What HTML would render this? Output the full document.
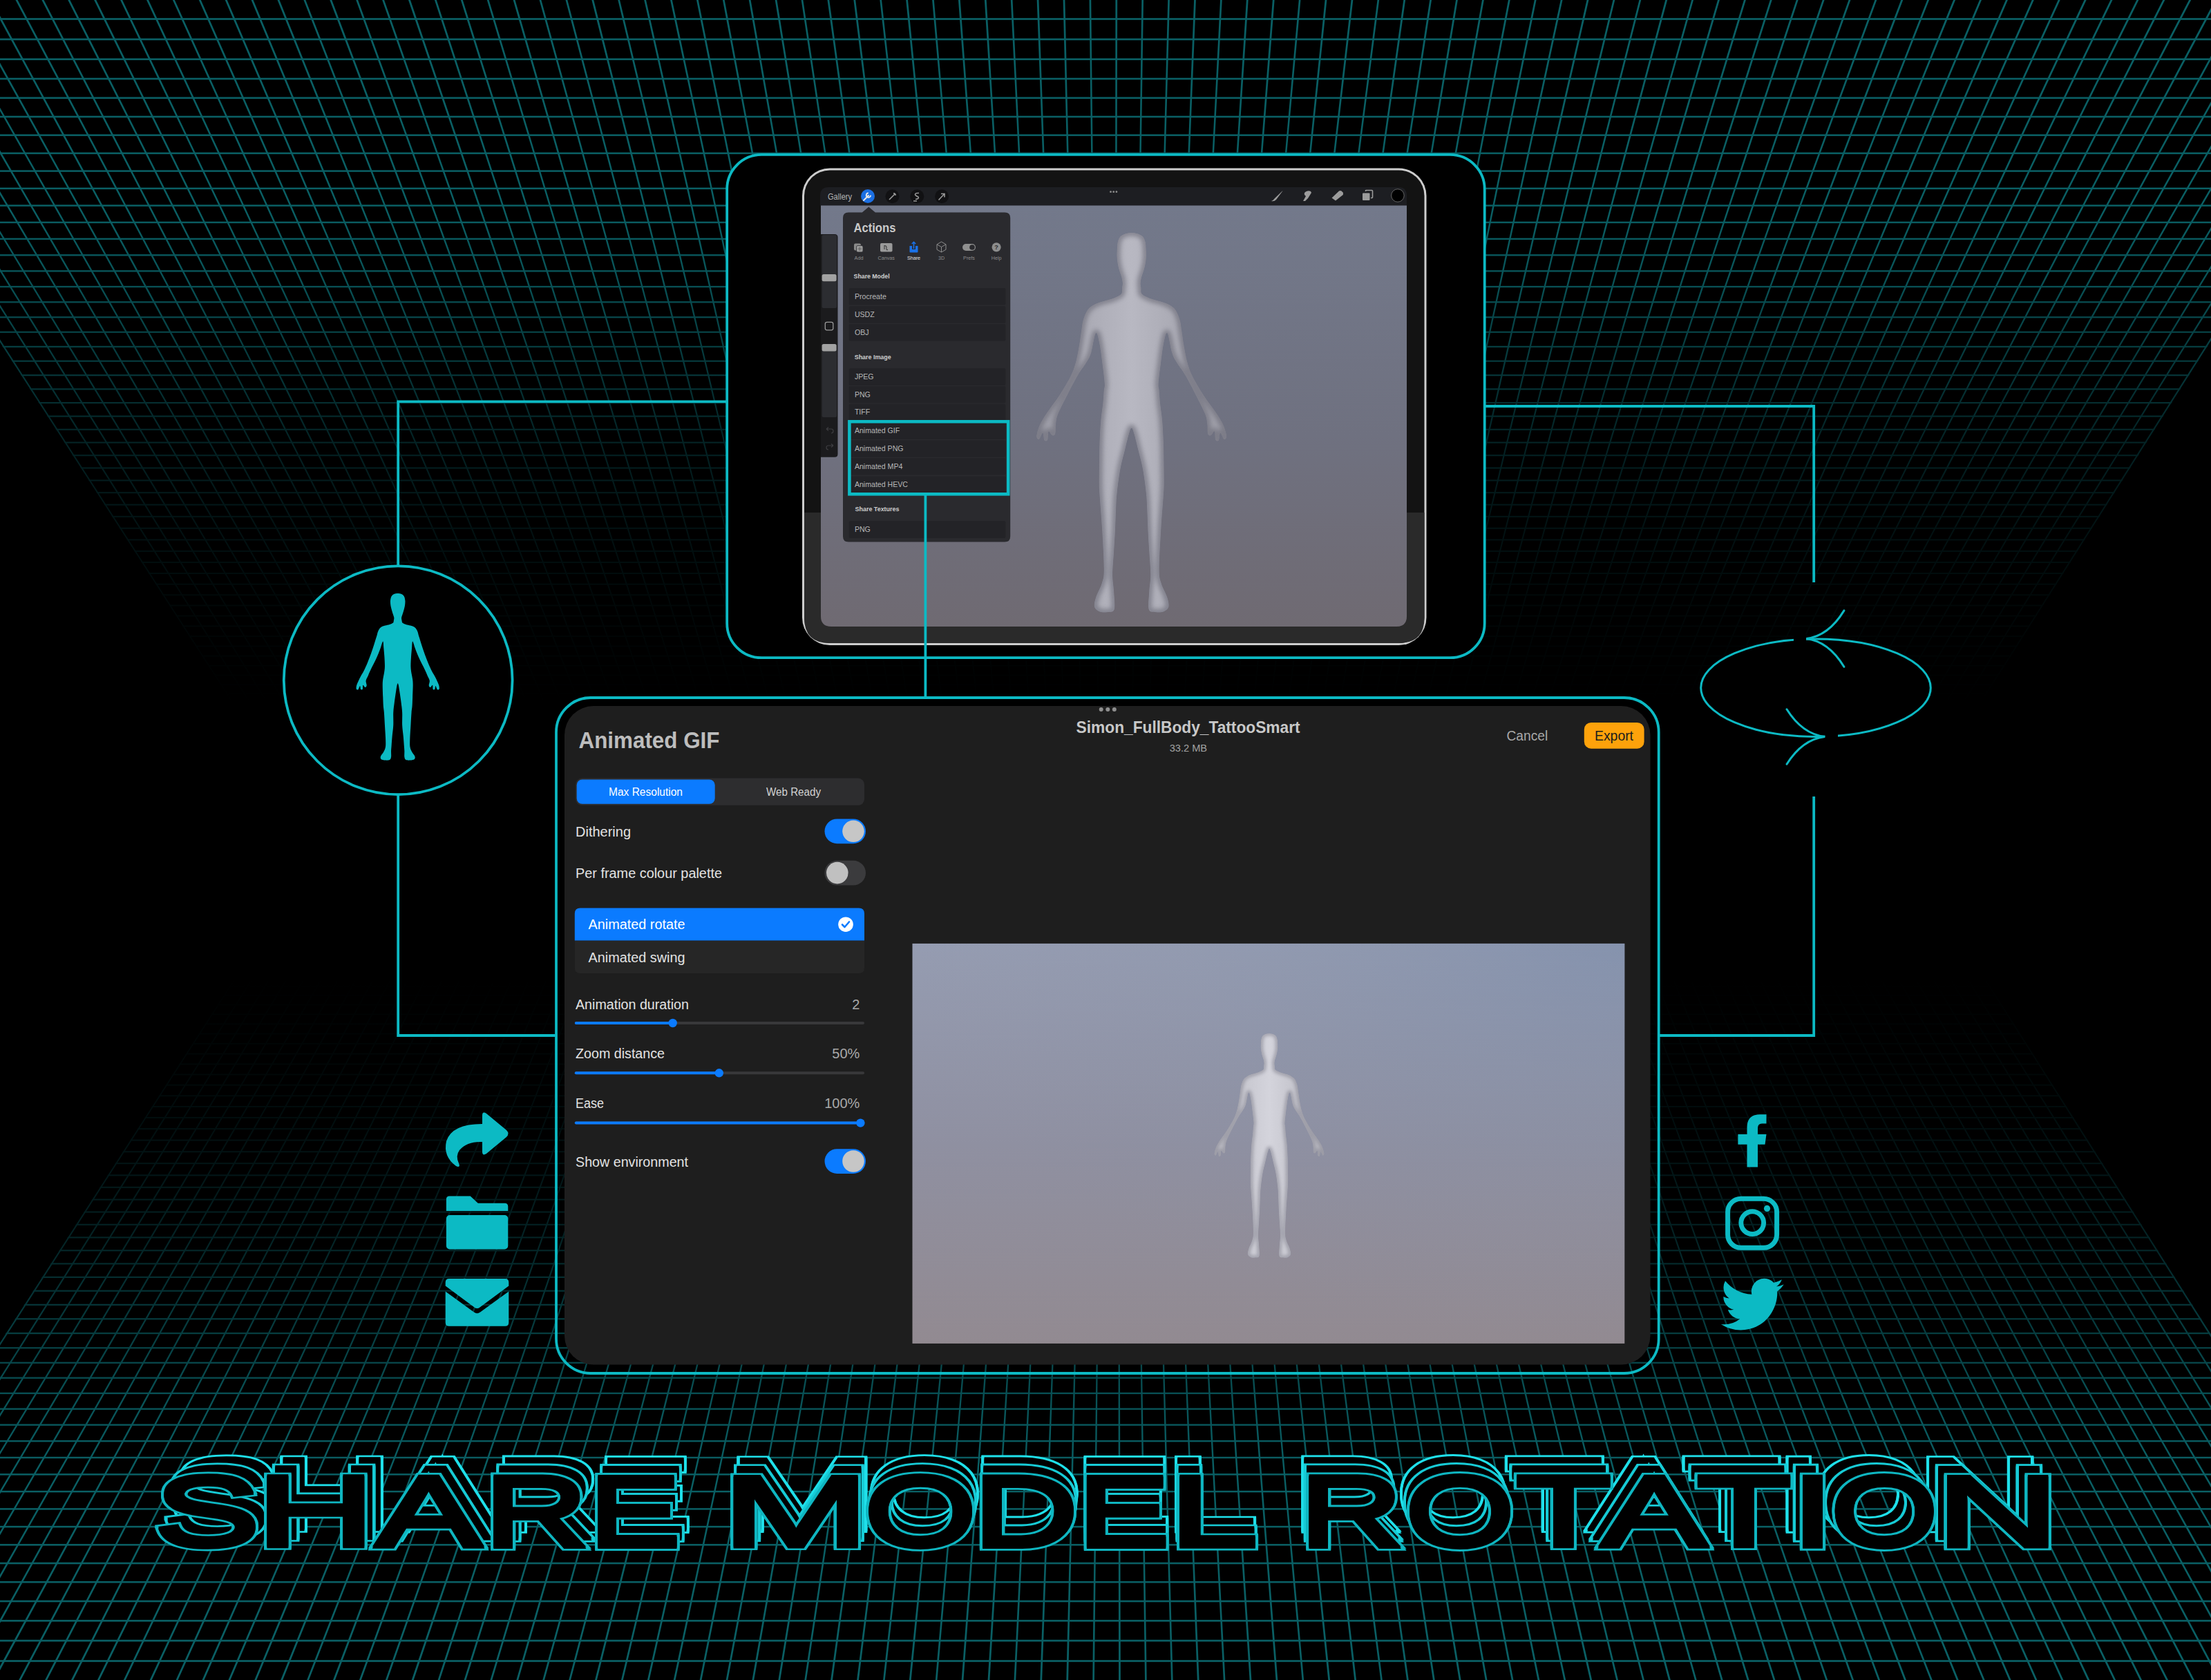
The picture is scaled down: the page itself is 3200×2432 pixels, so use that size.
<!DOCTYPE html>
<html><head><meta charset="utf-8"><title>Share Model Rotation</title>
<style>html,body{margin:0;padding:0;background:#000;}body{width:3200px;height:2432px;overflow:hidden;}
svg{display:block;font-family:"Liberation Sans",sans-serif;}</style></head>
<body><svg width="3200" height="2432" viewBox="0 0 3200 2432">
<rect width="3200" height="2432" fill="#000"/>
<defs>
<linearGradient id="fadeG" gradientUnits="userSpaceOnUse" x1="0" y1="0" x2="0" y2="1216"><stop offset="0.000" stop-color="#ffffff"/><stop offset="0.247" stop-color="#ffffff"/><stop offset="0.330" stop-color="#e0e0e0"/><stop offset="0.420" stop-color="#9e9e9e"/><stop offset="0.520" stop-color="#616161"/><stop offset="0.620" stop-color="#333333"/><stop offset="0.710" stop-color="#171717"/><stop offset="0.790" stop-color="#080808"/><stop offset="0.840" stop-color="#000000"/></linearGradient>
<mask id="fadeM" maskUnits="userSpaceOnUse" x="-400" y="-10" width="4000" height="1300"><rect x="-400" y="-10" width="4000" height="1300" fill="url(#fadeG)"/></mask>
<clipPath id="ceilC"><path d="M-325.5 -10L3519.1 -10L2802.8 1120.0L401.5 1120.0Z"/></clipPath>
<path id="human" d="M57.00 0.00C55.33 0.00 53.42 0.33 52.00 1.00C50.58 1.67 49.33 2.50 48.50 4.00C47.67 5.50 47.17 7.83 47.00 10.00C46.83 12.17 47.17 14.83 47.50 17.00C47.83 19.17 48.50 21.17 49.00 23.00C49.50 24.83 50.00 26.33 50.50 28.00C51.00 29.67 51.83 31.50 52.00 33.00C52.17 34.50 51.75 35.83 51.50 37.00C51.25 38.17 51.42 39.17 50.50 40.00C49.58 40.83 47.75 41.42 46.00 42.00C44.25 42.58 42.00 42.83 40.00 43.50C38.00 44.17 35.58 44.75 34.00 46.00C32.42 47.25 31.42 49.00 30.50 51.00C29.58 53.00 29.42 55.00 28.50 58.00C27.58 61.00 26.25 65.17 25.00 69.00C23.75 72.83 22.50 76.83 21.00 81.00C19.50 85.17 17.67 90.00 16.00 94.00C14.33 98.00 12.50 102.00 11.00 105.00C9.50 108.00 8.17 109.83 7.00 112.00C5.83 114.17 4.92 116.00 4.00 118.00C3.08 120.00 2.00 122.17 1.50 124.00C1.00 125.83 0.67 128.00 1.00 129.00C1.33 130.00 2.67 130.67 3.50 130.00C4.33 129.33 5.42 125.08 6.00 125.00C6.58 124.92 6.42 128.75 7.00 129.50C7.58 130.25 9.00 130.42 9.50 129.50C10.00 128.58 9.42 124.42 10.00 124.00C10.58 123.58 12.17 126.92 13.00 127.00C13.83 127.08 14.83 126.00 15.00 124.50C15.17 123.00 13.67 120.25 14.00 118.00C14.33 115.75 15.67 114.00 17.00 111.00C18.33 108.00 20.33 103.50 22.00 100.00C23.67 96.50 25.50 93.17 27.00 90.00C28.50 86.83 29.83 83.83 31.00 81.00C32.17 78.17 33.00 75.67 34.00 73.00C35.00 70.33 36.33 64.83 37.00 65.00C37.67 65.17 37.67 70.50 38.00 74.00C38.33 77.50 38.75 81.83 39.00 86.00C39.25 90.17 39.58 95.33 39.50 99.00C39.42 102.67 38.92 105.17 38.50 108.00C38.08 110.83 37.33 113.33 37.00 116.00C36.67 118.67 36.50 120.00 36.50 124.00C36.50 128.00 36.83 135.33 37.00 140.00C37.17 144.67 37.25 148.50 37.50 152.00C37.75 155.50 38.17 156.67 38.50 161.00C38.83 165.33 39.17 172.33 39.50 178.00C39.83 183.67 40.33 190.17 40.50 195.00C40.67 199.83 40.92 203.83 40.50 207.00C40.08 210.17 39.08 211.83 38.00 214.00C36.92 216.17 34.58 218.33 34.00 220.00C33.42 221.67 33.50 223.08 34.50 224.00C35.50 224.92 38.08 225.33 40.00 225.50C41.92 225.67 44.67 225.75 46.00 225.00C47.33 224.25 47.67 223.00 48.00 221.00C48.33 219.00 47.92 215.50 48.00 213.00C48.08 210.50 48.25 209.33 48.50 206.00C48.75 202.67 49.08 197.67 49.50 193.00C49.92 188.33 50.75 183.33 51.00 178.00C51.25 172.67 50.75 166.17 51.00 161.00C51.25 155.83 51.92 151.67 52.50 147.00C53.08 142.33 53.92 136.83 54.50 133.00C55.08 129.17 55.58 125.92 56.00 124.00C56.42 122.08 56.67 121.50 57.00 121.50C57.33 121.50 57.58 122.08 58.00 124.00C58.42 125.92 58.92 129.17 59.50 133.00C60.08 136.83 60.92 142.33 61.50 147.00C62.08 151.67 62.75 155.83 63.00 161.00C63.25 166.17 62.75 172.67 63.00 178.00C63.25 183.33 64.08 188.33 64.50 193.00C64.92 197.67 65.25 202.67 65.50 206.00C65.75 209.33 65.92 210.50 66.00 213.00C66.08 215.50 65.67 219.00 66.00 221.00C66.33 223.00 66.67 224.25 68.00 225.00C69.33 225.75 72.08 225.67 74.00 225.50C75.92 225.33 78.50 224.92 79.50 224.00C80.50 223.08 80.58 221.67 80.00 220.00C79.42 218.33 77.08 216.17 76.00 214.00C74.92 211.83 73.92 210.17 73.50 207.00C73.08 203.83 73.33 199.83 73.50 195.00C73.67 190.17 74.17 183.67 74.50 178.00C74.83 172.33 75.17 165.33 75.50 161.00C75.83 156.67 76.25 155.50 76.50 152.00C76.75 148.50 76.83 144.67 77.00 140.00C77.17 135.33 77.50 128.00 77.50 124.00C77.50 120.00 77.33 118.67 77.00 116.00C76.67 113.33 75.92 110.83 75.50 108.00C75.08 105.17 74.58 102.67 74.50 99.00C74.42 95.33 74.75 90.17 75.00 86.00C75.25 81.83 75.67 77.50 76.00 74.00C76.33 70.50 76.33 65.17 77.00 65.00C77.67 64.83 79.00 70.33 80.00 73.00C81.00 75.67 81.83 78.17 83.00 81.00C84.17 83.83 85.50 86.83 87.00 90.00C88.50 93.17 90.33 96.50 92.00 100.00C93.67 103.50 95.67 108.00 97.00 111.00C98.33 114.00 99.67 115.75 100.00 118.00C100.33 120.25 98.83 123.00 99.00 124.50C99.17 126.00 100.17 127.08 101.00 127.00C101.83 126.92 103.42 123.58 104.00 124.00C104.58 124.42 104.00 128.58 104.50 129.50C105.00 130.42 106.42 130.25 107.00 129.50C107.58 128.75 107.42 124.92 108.00 125.00C108.58 125.08 109.67 129.33 110.50 130.00C111.33 130.67 112.67 130.00 113.00 129.00C113.33 128.00 113.00 125.83 112.50 124.00C112.00 122.17 110.92 120.00 110.00 118.00C109.08 116.00 108.17 114.17 107.00 112.00C105.83 109.83 104.50 108.00 103.00 105.00C101.50 102.00 99.67 98.00 98.00 94.00C96.33 90.00 94.50 85.17 93.00 81.00C91.50 76.83 90.25 72.83 89.00 69.00C87.75 65.17 86.42 61.00 85.50 58.00C84.58 55.00 84.42 53.00 83.50 51.00C82.58 49.00 81.58 47.25 80.00 46.00C78.42 44.75 76.00 44.17 74.00 43.50C72.00 42.83 69.75 42.58 68.00 42.00C66.25 41.42 64.42 40.83 63.50 40.00C62.58 39.17 62.75 38.17 62.50 37.00C62.25 35.83 61.83 34.50 62.00 33.00C62.17 31.50 63.00 29.67 63.50 28.00C64.00 26.33 64.50 24.83 65.00 23.00C65.50 21.17 66.17 19.17 66.50 17.00C66.83 14.83 67.17 12.17 67.00 10.00C66.83 7.83 66.33 5.50 65.50 4.00C64.67 2.50 63.42 1.67 62.00 1.00C60.58 0.33 58.67 0.00 57.00 0.00Z"/>
<path id="human3d" d="M57.00 0.00C55.83 0.00 54.58 0.13 53.50 0.50C52.42 0.87 51.25 1.37 50.50 2.20C49.75 3.03 49.32 4.20 49.00 5.50C48.68 6.80 48.68 8.58 48.60 10.00C48.52 11.42 48.45 12.67 48.50 14.00C48.55 15.33 48.67 16.58 48.90 18.00C49.13 19.42 49.52 21.08 49.90 22.50C50.28 23.92 50.88 25.25 51.20 26.50C51.52 27.75 51.75 28.92 51.80 30.00C51.85 31.08 51.63 31.92 51.50 33.00C51.37 34.08 51.83 35.50 51.00 36.50C50.17 37.50 48.33 38.25 46.50 39.00C44.67 39.75 41.83 40.37 40.00 41.00C38.17 41.63 36.92 41.97 35.50 42.80C34.08 43.63 32.58 44.47 31.50 46.00C30.42 47.53 29.58 50.00 29.00 52.00C28.42 54.00 28.40 55.40 28.00 58.00C27.60 60.60 27.18 64.27 26.60 67.60C26.02 70.93 25.35 74.93 24.50 78.00C23.65 81.07 23.00 82.92 21.50 86.00C20.00 89.08 17.42 93.42 15.50 96.50C13.58 99.58 11.58 102.17 10.00 104.50C8.42 106.83 7.08 108.67 6.00 110.50C4.92 112.33 4.17 113.67 3.50 115.50C2.83 117.33 2.00 120.22 2.00 121.50C2.00 122.78 2.90 123.53 3.50 123.20C4.10 122.87 5.10 119.40 5.60 119.50C6.10 119.60 6.03 123.13 6.50 123.80C6.97 124.47 7.98 124.38 8.40 123.50C8.82 122.62 8.57 118.95 9.00 118.50C9.43 118.05 10.37 120.55 11.00 120.80C11.63 121.05 12.43 121.13 12.80 120.00C13.17 118.87 12.92 116.00 13.20 114.00C13.48 112.00 13.42 110.83 14.50 108.00C15.58 105.17 17.80 100.83 19.70 97.00C21.60 93.17 24.10 88.17 25.90 85.00C27.70 81.83 29.23 80.17 30.50 78.00C31.77 75.83 32.53 75.00 33.50 72.00C34.47 69.00 35.48 61.00 36.30 60.00C37.12 59.00 37.75 62.83 38.40 66.00C39.05 69.17 39.70 75.00 40.20 79.00C40.70 83.00 41.27 87.50 41.40 90.00C41.53 92.50 41.17 92.00 41.00 94.00C40.83 96.00 40.70 99.00 40.40 102.00C40.10 105.00 39.52 108.17 39.20 112.00C38.88 115.83 38.65 121.00 38.50 125.00C38.35 129.00 38.35 131.83 38.30 136.00C38.25 140.17 38.15 146.33 38.20 150.00C38.25 153.67 38.30 153.33 38.60 158.00C38.90 162.67 39.60 170.83 40.00 178.00C40.40 185.17 41.03 195.83 41.00 201.00C40.97 206.17 40.55 206.33 39.80 209.00C39.05 211.67 37.22 214.67 36.50 217.00C35.78 219.33 35.17 221.50 35.50 223.00C35.83 224.50 37.25 225.45 38.50 226.00C39.75 226.55 41.58 226.52 43.00 226.30C44.42 226.08 46.37 226.75 47.00 224.70C47.63 222.65 46.97 217.45 46.80 214.00C46.63 210.55 46.00 208.00 46.00 204.00C46.00 200.00 46.55 194.33 46.80 190.00C47.05 185.67 47.30 182.17 47.50 178.00C47.70 173.83 47.82 168.83 48.00 165.00C48.18 161.17 48.18 159.00 48.60 155.00C49.02 151.00 49.72 145.33 50.50 141.00C51.28 136.67 52.47 132.50 53.30 129.00C54.13 125.50 54.88 122.08 55.50 120.00C56.12 117.92 56.50 116.50 57.00 116.50C57.50 116.50 57.88 117.92 58.50 120.00C59.12 122.08 59.87 125.50 60.70 129.00C61.53 132.50 62.72 136.67 63.50 141.00C64.28 145.33 64.98 151.00 65.40 155.00C65.82 159.00 65.82 161.17 66.00 165.00C66.18 168.83 66.30 173.83 66.50 178.00C66.70 182.17 66.95 185.67 67.20 190.00C67.45 194.33 68.00 200.00 68.00 204.00C68.00 208.00 67.37 210.55 67.20 214.00C67.03 217.45 66.37 222.65 67.00 224.70C67.63 226.75 69.58 226.08 71.00 226.30C72.42 226.52 74.25 226.55 75.50 226.00C76.75 225.45 78.17 224.50 78.50 223.00C78.83 221.50 78.22 219.33 77.50 217.00C76.78 214.67 74.95 211.67 74.20 209.00C73.45 206.33 73.03 206.17 73.00 201.00C72.97 195.83 73.60 185.17 74.00 178.00C74.40 170.83 75.10 162.67 75.40 158.00C75.70 153.33 75.75 153.67 75.80 150.00C75.85 146.33 75.75 140.17 75.70 136.00C75.65 131.83 75.65 129.00 75.50 125.00C75.35 121.00 75.12 115.83 74.80 112.00C74.48 108.17 73.90 105.00 73.60 102.00C73.30 99.00 73.17 96.00 73.00 94.00C72.83 92.00 72.47 92.50 72.60 90.00C72.73 87.50 73.30 83.00 73.80 79.00C74.30 75.00 74.95 69.17 75.60 66.00C76.25 62.83 76.88 59.00 77.70 60.00C78.52 61.00 79.53 69.00 80.50 72.00C81.47 75.00 82.23 75.83 83.50 78.00C84.77 80.17 86.30 81.83 88.10 85.00C89.90 88.17 92.40 93.17 94.30 97.00C96.20 100.83 98.42 105.17 99.50 108.00C100.58 110.83 100.52 112.00 100.80 114.00C101.08 116.00 100.83 118.87 101.20 120.00C101.57 121.13 102.37 121.05 103.00 120.80C103.63 120.55 104.57 118.05 105.00 118.50C105.43 118.95 105.18 122.62 105.60 123.50C106.02 124.38 107.03 124.47 107.50 123.80C107.97 123.13 107.90 119.60 108.40 119.50C108.90 119.40 109.90 122.87 110.50 123.20C111.10 123.53 112.00 122.78 112.00 121.50C112.00 120.22 111.17 117.33 110.50 115.50C109.83 113.67 109.08 112.33 108.00 110.50C106.92 108.67 105.58 106.83 104.00 104.50C102.42 102.17 100.42 99.58 98.50 96.50C96.58 93.42 94.00 89.08 92.50 86.00C91.00 82.92 90.35 81.07 89.50 78.00C88.65 74.93 87.98 70.93 87.40 67.60C86.82 64.27 86.40 60.60 86.00 58.00C85.60 55.40 85.58 54.00 85.00 52.00C84.42 50.00 83.58 47.53 82.50 46.00C81.42 44.47 79.92 43.63 78.50 42.80C77.08 41.97 75.83 41.63 74.00 41.00C72.17 40.37 69.33 39.75 67.50 39.00C65.67 38.25 63.83 37.50 63.00 36.50C62.17 35.50 62.63 34.08 62.50 33.00C62.37 31.92 62.15 31.08 62.20 30.00C62.25 28.92 62.48 27.75 62.80 26.50C63.12 25.25 63.72 23.92 64.10 22.50C64.48 21.08 64.87 19.42 65.10 18.00C65.33 16.58 65.45 15.33 65.50 14.00C65.55 12.67 65.48 11.42 65.40 10.00C65.32 8.58 65.32 6.80 65.00 5.50C64.68 4.20 64.25 3.03 63.50 2.20C62.75 1.37 61.58 0.87 60.50 0.50C59.42 0.13 58.17 0.00 57.00 0.00Z"/>
<clipPath id="hclip"><use href="#human3d"/></clipPath><filter id="fblur" x="-20%" y="-20%" width="140%" height="140%"><feGaussianBlur stdDeviation="1.3"/></filter>
<linearGradient id="canvasG" x1="0" y1="0" x2="0" y2="1"><stop offset="0" stop-color="#73798b"/><stop offset="0.55" stop-color="#6f7180"/><stop offset="1" stop-color="#6f6a72"/></linearGradient>
<linearGradient id="prevG" x1="0" y1="0" x2="0" y2="1"><stop offset="0" stop-color="#959cb1"/><stop offset="0.5" stop-color="#8f90a1"/><stop offset="1" stop-color="#928a91"/></linearGradient>
<radialGradient id="prevH" cx="1" cy="0" r="1"><stop offset="0" stop-color="#7388aa" stop-opacity="0.45"/><stop offset="0.6" stop-color="#8090aa" stop-opacity="0.12"/><stop offset="1" stop-color="#8890a8" stop-opacity="0"/></radialGradient>
<linearGradient id="figG" x1="0" y1="0" x2="1" y2="0"><stop offset="0" stop-color="#b9b9c1"/><stop offset="0.5" stop-color="#d4d4dc"/><stop offset="1" stop-color="#b4b4bc"/></linearGradient>
<linearGradient id="figG2" x1="0" y1="0" x2="1" y2="0"><stop offset="0" stop-color="#9c9ca6"/><stop offset="0.5" stop-color="#b8b8c2"/><stop offset="1" stop-color="#9a9aa4"/></linearGradient>
</defs>
<g clip-path="url(#ceilC)"><g mask="url(#fadeM)"><path d="M-322.0 -5.0L-318.7 -5.0L403.7 1120.0L401.7 1120.0ZM-284.0 -5.0L-280.7 -5.0L427.5 1120.0L425.5 1120.0ZM-246.0 -5.0L-242.8 -5.0L451.2 1120.0L449.2 1120.0ZM-208.0 -5.0L-204.8 -5.0L475.0 1120.0L473.0 1120.0ZM-170.1 -5.0L-166.9 -5.0L498.7 1120.0L496.7 1120.0ZM-132.1 -5.0L-128.9 -5.0L522.5 1120.0L520.5 1120.0ZM-94.1 -5.0L-91.0 -5.0L546.2 1120.0L544.2 1120.0ZM-56.1 -5.0L-53.0 -5.0L570.0 1120.0L568.0 1120.0ZM-18.2 -5.0L-15.0 -5.0L593.7 1120.0L591.7 1120.0ZM19.8 -5.0L22.9 -5.0L617.5 1120.0L615.5 1120.0ZM57.8 -5.0L60.9 -5.0L641.2 1120.0L639.3 1120.0ZM95.7 -5.0L98.8 -5.0L664.9 1120.0L663.0 1120.0ZM133.7 -5.0L136.8 -5.0L688.7 1120.0L686.8 1120.0ZM171.7 -5.0L174.7 -5.0L712.4 1120.0L710.5 1120.0ZM209.7 -5.0L212.7 -5.0L736.2 1120.0L734.3 1120.0ZM247.6 -5.0L250.6 -5.0L759.9 1120.0L758.0 1120.0ZM285.6 -5.0L288.6 -5.0L783.7 1120.0L781.8 1120.0ZM323.6 -5.0L326.6 -5.0L807.4 1120.0L805.5 1120.0ZM361.5 -5.0L364.5 -5.0L831.2 1120.0L829.3 1120.0ZM399.5 -5.0L402.5 -5.0L854.9 1120.0L853.1 1120.0ZM437.5 -5.0L440.4 -5.0L878.7 1120.0L876.8 1120.0ZM475.4 -5.0L478.4 -5.0L902.4 1120.0L900.6 1120.0ZM513.4 -5.0L516.3 -5.0L926.2 1120.0L924.3 1120.0ZM551.4 -5.0L554.3 -5.0L949.9 1120.0L948.1 1120.0ZM589.3 -5.0L592.3 -5.0L973.6 1120.0L971.8 1120.0ZM627.3 -5.0L630.2 -5.0L997.4 1120.0L995.6 1120.0ZM665.3 -5.0L668.2 -5.0L1021.1 1120.0L1019.3 1120.0ZM703.3 -5.0L706.1 -5.0L1044.9 1120.0L1043.1 1120.0ZM741.2 -5.0L744.1 -5.0L1068.6 1120.0L1066.8 1120.0ZM779.2 -5.0L782.0 -5.0L1092.4 1120.0L1090.6 1120.0ZM817.2 -5.0L820.0 -5.0L1116.1 1120.0L1114.4 1120.0ZM855.1 -5.0L858.0 -5.0L1139.9 1120.0L1138.1 1120.0ZM893.1 -5.0L895.9 -5.0L1163.6 1120.0L1161.9 1120.0ZM931.1 -5.0L933.9 -5.0L1187.4 1120.0L1185.6 1120.0ZM969.0 -5.0L971.8 -5.0L1211.1 1120.0L1209.4 1120.0ZM1007.0 -5.0L1009.8 -5.0L1234.9 1120.0L1233.1 1120.0ZM1045.0 -5.0L1047.8 -5.0L1258.6 1120.0L1256.9 1120.0ZM1082.9 -5.0L1085.7 -5.0L1282.4 1120.0L1280.6 1120.0ZM1120.9 -5.0L1123.7 -5.0L1306.1 1120.0L1304.4 1120.0ZM1158.9 -5.0L1161.6 -5.0L1329.9 1120.0L1328.1 1120.0ZM1196.8 -5.0L1199.6 -5.0L1353.6 1120.0L1351.9 1120.0ZM1234.8 -5.0L1237.6 -5.0L1377.4 1120.0L1375.6 1120.0ZM1272.8 -5.0L1275.5 -5.0L1401.1 1120.0L1399.4 1120.0ZM1310.7 -5.0L1313.5 -5.0L1424.9 1120.0L1423.1 1120.0ZM1348.7 -5.0L1351.4 -5.0L1448.6 1120.0L1446.9 1120.0ZM1386.6 -5.0L1389.4 -5.0L1472.4 1120.0L1470.6 1120.0ZM1424.6 -5.0L1427.4 -5.0L1496.1 1120.0L1494.4 1120.0ZM1462.6 -5.0L1465.3 -5.0L1519.9 1120.0L1518.1 1120.0ZM1500.5 -5.0L1503.3 -5.0L1543.6 1120.0L1541.9 1120.0ZM1538.5 -5.0L1541.3 -5.0L1567.4 1120.0L1565.6 1120.0ZM1576.5 -5.0L1579.2 -5.0L1591.1 1120.0L1589.4 1120.0ZM1614.4 -5.0L1617.2 -5.0L1614.9 1120.0L1613.1 1120.0ZM1652.4 -5.0L1655.1 -5.0L1638.6 1120.0L1636.9 1120.0ZM1690.4 -5.0L1693.1 -5.0L1662.4 1120.0L1660.6 1120.0ZM1728.3 -5.0L1731.1 -5.0L1686.1 1120.0L1684.4 1120.0ZM1766.3 -5.0L1769.0 -5.0L1709.9 1120.0L1708.1 1120.0ZM1804.2 -5.0L1807.0 -5.0L1733.6 1120.0L1731.9 1120.0ZM1842.2 -5.0L1845.0 -5.0L1757.4 1120.0L1755.6 1120.0ZM1880.2 -5.0L1882.9 -5.0L1781.1 1120.0L1779.4 1120.0ZM1918.1 -5.0L1920.9 -5.0L1804.9 1120.0L1803.1 1120.0ZM1956.1 -5.0L1958.9 -5.0L1828.6 1120.0L1826.9 1120.0ZM1994.1 -5.0L1996.8 -5.0L1852.4 1120.0L1850.6 1120.0ZM2032.0 -5.0L2034.8 -5.0L1876.1 1120.0L1874.4 1120.0ZM2070.0 -5.0L2072.8 -5.0L1899.9 1120.0L1898.1 1120.0ZM2107.9 -5.0L2110.7 -5.0L1923.6 1120.0L1921.9 1120.0ZM2145.9 -5.0L2148.7 -5.0L1947.4 1120.0L1945.6 1120.0ZM2183.9 -5.0L2186.7 -5.0L1971.1 1120.0L1969.4 1120.0ZM2221.8 -5.0L2224.6 -5.0L1994.9 1120.0L1993.1 1120.0ZM2259.8 -5.0L2262.6 -5.0L2018.7 1120.0L2016.9 1120.0ZM2297.7 -5.0L2300.6 -5.0L2042.4 1120.0L2040.6 1120.0ZM2335.7 -5.0L2338.5 -5.0L2066.2 1120.0L2064.4 1120.0ZM2373.7 -5.0L2376.5 -5.0L2089.9 1120.0L2088.1 1120.0ZM2411.6 -5.0L2414.5 -5.0L2113.7 1120.0L2111.9 1120.0ZM2449.6 -5.0L2452.4 -5.0L2137.4 1120.0L2135.6 1120.0ZM2487.5 -5.0L2490.4 -5.0L2161.2 1120.0L2159.4 1120.0ZM2525.5 -5.0L2528.4 -5.0L2184.9 1120.0L2183.1 1120.0ZM2563.4 -5.0L2566.3 -5.0L2208.7 1120.0L2206.9 1120.0ZM2601.4 -5.0L2604.3 -5.0L2232.4 1120.0L2230.6 1120.0ZM2639.4 -5.0L2642.3 -5.0L2256.2 1120.0L2254.4 1120.0ZM2677.3 -5.0L2680.2 -5.0L2279.9 1120.0L2278.1 1120.0ZM2715.3 -5.0L2718.2 -5.0L2303.7 1120.0L2301.9 1120.0ZM2753.2 -5.0L2756.2 -5.0L2327.4 1120.0L2325.6 1120.0ZM2791.2 -5.0L2794.1 -5.0L2351.2 1120.0L2349.4 1120.0ZM2829.1 -5.0L2832.1 -5.0L2375.0 1120.0L2373.1 1120.0ZM2867.1 -5.0L2870.1 -5.0L2398.7 1120.0L2396.8 1120.0ZM2905.1 -5.0L2908.1 -5.0L2422.5 1120.0L2420.6 1120.0ZM2943.0 -5.0L2946.0 -5.0L2446.2 1120.0L2444.3 1120.0ZM2981.0 -5.0L2984.0 -5.0L2470.0 1120.0L2468.1 1120.0ZM3018.9 -5.0L3022.0 -5.0L2493.7 1120.0L2491.8 1120.0ZM3056.9 -5.0L3059.9 -5.0L2517.5 1120.0L2515.6 1120.0ZM3094.8 -5.0L3097.9 -5.0L2541.2 1120.0L2539.3 1120.0ZM3132.8 -5.0L3135.9 -5.0L2565.0 1120.0L2563.1 1120.0ZM3170.7 -5.0L3173.8 -5.0L2588.8 1120.0L2586.8 1120.0ZM3208.7 -5.0L3211.8 -5.0L2612.5 1120.0L2610.6 1120.0ZM3246.7 -5.0L3249.8 -5.0L2636.3 1120.0L2634.3 1120.0ZM3284.6 -5.0L3287.8 -5.0L2660.0 1120.0L2658.1 1120.0ZM3322.6 -5.0L3325.7 -5.0L2683.8 1120.0L2681.8 1120.0ZM3360.5 -5.0L3363.7 -5.0L2707.5 1120.0L2705.5 1120.0ZM3398.5 -5.0L3401.7 -5.0L2731.3 1120.0L2729.3 1120.0ZM3436.4 -5.0L3439.7 -5.0L2755.0 1120.0L2753.0 1120.0ZM3474.4 -5.0L3477.6 -5.0L2778.8 1120.0L2776.8 1120.0ZM3512.3 -5.0L3515.6 -5.0L2802.6 1120.0L2800.5 1120.0Z" fill="#0a5f64"/>
<rect x="-321.7" y="-3.88" width="3837.1" height="2.75" fill="#0a5f64"/>
<rect x="-302.4" y="26.14" width="3798.8" height="2.72" fill="#0a5f64"/>
<rect x="-283.5" y="55.57" width="3761.3" height="2.70" fill="#0a5f64"/>
<rect x="-265.0" y="84.42" width="3724.5" height="2.67" fill="#0a5f64"/>
<rect x="-246.8" y="112.72" width="3688.4" height="2.65" fill="#0a5f64"/>
<rect x="-229.0" y="140.47" width="3653.0" height="2.62" fill="#0a5f64"/>
<rect x="-211.5" y="167.69" width="3618.3" height="2.60" fill="#0a5f64"/>
<rect x="-194.3" y="194.39" width="3584.2" height="2.57" fill="#0a5f64"/>
<rect x="-177.5" y="220.60" width="3550.8" height="2.55" fill="#0a5f64"/>
<rect x="-161.0" y="246.32" width="3518.0" height="2.52" fill="#0a5f64"/>
<rect x="-144.8" y="271.58" width="3485.8" height="2.50" fill="#0a5f64"/>
<rect x="-128.8" y="296.37" width="3454.2" height="2.48" fill="#0a5f64"/>
<rect x="-113.2" y="320.72" width="3423.1" height="2.45" fill="#0a5f64"/>
<rect x="-97.8" y="344.63" width="3392.6" height="2.43" fill="#0a5f64"/>
<rect x="-82.7" y="368.12" width="3362.7" height="2.41" fill="#0a5f64"/>
<rect x="-67.9" y="391.19" width="3333.2" height="2.39" fill="#0a5f64"/>
<rect x="-53.3" y="413.87" width="3304.3" height="2.37" fill="#0a5f64"/>
<rect x="-39.0" y="436.15" width="3275.9" height="2.35" fill="#0a5f64"/>
<rect x="-25.0" y="458.06" width="3247.9" height="2.33" fill="#0a5f64"/>
<rect x="-11.1" y="479.59" width="3220.5" height="2.31" fill="#0a5f64"/>
<rect x="2.5" y="500.76" width="3193.5" height="2.29" fill="#0a5f64"/>
<rect x="15.8" y="521.58" width="3166.9" height="2.27" fill="#0a5f64"/>
<rect x="29.0" y="542.05" width="3140.8" height="2.25" fill="#0a5f64"/>
<rect x="41.9" y="562.19" width="3115.1" height="2.23" fill="#0a5f64"/>
<rect x="54.7" y="582.00" width="3089.9" height="2.22" fill="#0a5f64"/>
<rect x="67.2" y="601.50" width="3065.0" height="2.20" fill="#0a5f64"/>
<rect x="79.5" y="620.68" width="3040.5" height="2.18" fill="#0a5f64"/>
<rect x="91.6" y="639.55" width="3016.5" height="2.16" fill="#0a5f64"/>
<rect x="103.6" y="658.13" width="2992.8" height="2.15" fill="#0a5f64"/>
<rect x="115.3" y="676.42" width="2969.5" height="2.13" fill="#0a5f64"/>
<rect x="126.9" y="694.42" width="2946.5" height="2.11" fill="#0a5f64"/>
<rect x="138.3" y="712.15" width="2923.9" height="2.10" fill="#0a5f64"/>
<rect x="149.5" y="729.61" width="2901.6" height="2.08" fill="#0a5f64"/>
<rect x="160.5" y="746.80" width="2879.7" height="2.06" fill="#0a5f64"/>
<rect x="171.4" y="763.74" width="2858.1" height="2.05" fill="#0a5f64"/>
<rect x="182.1" y="780.42" width="2836.8" height="2.03" fill="#0a5f64"/>
<rect x="192.7" y="796.86" width="2815.8" height="2.02" fill="#0a5f64"/>
<rect x="203.1" y="813.05" width="2795.2" height="2.00" fill="#0a5f64"/>
<rect x="213.3" y="829.01" width="2774.8" height="1.99" fill="#0a5f64"/>
<rect x="223.4" y="844.73" width="2754.8" height="1.97" fill="#0a5f64"/>
<rect x="233.4" y="860.23" width="2735.0" height="1.96" fill="#0a5f64"/>
<rect x="243.2" y="875.51" width="2715.5" height="1.95" fill="#0a5f64"/>
<rect x="252.9" y="890.57" width="2696.3" height="1.93" fill="#0a5f64"/>
<rect x="262.4" y="905.42" width="2677.4" height="1.92" fill="#0a5f64"/>
<rect x="271.8" y="920.07" width="2658.7" height="1.91" fill="#0a5f64"/>
<rect x="281.1" y="934.51" width="2640.3" height="1.89" fill="#0a5f64"/>
<rect x="290.3" y="948.75" width="2622.1" height="1.88" fill="#0a5f64"/>
<rect x="299.3" y="962.79" width="2604.2" height="1.87" fill="#0a5f64"/>
<rect x="308.2" y="976.64" width="2586.6" height="1.85" fill="#0a5f64"/>
<rect x="317.0" y="990.31" width="2569.1" height="1.84" fill="#0a5f64"/>
<rect x="325.6" y="1003.79" width="2551.9" height="1.83" fill="#0a5f64"/>
<rect x="334.2" y="1017.10" width="2535.0" height="1.82" fill="#0a5f64"/>
<rect x="342.6" y="1030.23" width="2518.2" height="1.80" fill="#0a5f64"/>
<rect x="350.9" y="1043.18" width="2501.7" height="1.79" fill="#0a5f64"/>
<rect x="359.1" y="1055.97" width="2485.4" height="1.78" fill="#0a5f64"/>
<rect x="367.2" y="1068.59" width="2469.3" height="1.77" fill="#0a5f64"/>
<rect x="375.3" y="1081.04" width="2453.4" height="1.76" fill="#0a5f64"/>
<rect x="383.2" y="1093.34" width="2437.7" height="1.75" fill="#0a5f64"/>
<rect x="390.9" y="1105.48" width="2422.2" height="1.74" fill="#0a5f64"/>
<rect x="398.6" y="1117.47" width="2406.9" height="1.72" fill="#0a5f64"/></g></g>
<g transform="translate(4.7,2432) scale(1,-1)"><g clip-path="url(#ceilC)"><g mask="url(#fadeM)"><path d="M-322.0 -5.0L-318.7 -5.0L403.7 1120.0L401.7 1120.0ZM-284.0 -5.0L-280.7 -5.0L427.5 1120.0L425.5 1120.0ZM-246.0 -5.0L-242.8 -5.0L451.2 1120.0L449.2 1120.0ZM-208.0 -5.0L-204.8 -5.0L475.0 1120.0L473.0 1120.0ZM-170.1 -5.0L-166.9 -5.0L498.7 1120.0L496.7 1120.0ZM-132.1 -5.0L-128.9 -5.0L522.5 1120.0L520.5 1120.0ZM-94.1 -5.0L-91.0 -5.0L546.2 1120.0L544.2 1120.0ZM-56.1 -5.0L-53.0 -5.0L570.0 1120.0L568.0 1120.0ZM-18.2 -5.0L-15.0 -5.0L593.7 1120.0L591.7 1120.0ZM19.8 -5.0L22.9 -5.0L617.5 1120.0L615.5 1120.0ZM57.8 -5.0L60.9 -5.0L641.2 1120.0L639.3 1120.0ZM95.7 -5.0L98.8 -5.0L664.9 1120.0L663.0 1120.0ZM133.7 -5.0L136.8 -5.0L688.7 1120.0L686.8 1120.0ZM171.7 -5.0L174.7 -5.0L712.4 1120.0L710.5 1120.0ZM209.7 -5.0L212.7 -5.0L736.2 1120.0L734.3 1120.0ZM247.6 -5.0L250.6 -5.0L759.9 1120.0L758.0 1120.0ZM285.6 -5.0L288.6 -5.0L783.7 1120.0L781.8 1120.0ZM323.6 -5.0L326.6 -5.0L807.4 1120.0L805.5 1120.0ZM361.5 -5.0L364.5 -5.0L831.2 1120.0L829.3 1120.0ZM399.5 -5.0L402.5 -5.0L854.9 1120.0L853.1 1120.0ZM437.5 -5.0L440.4 -5.0L878.7 1120.0L876.8 1120.0ZM475.4 -5.0L478.4 -5.0L902.4 1120.0L900.6 1120.0ZM513.4 -5.0L516.3 -5.0L926.2 1120.0L924.3 1120.0ZM551.4 -5.0L554.3 -5.0L949.9 1120.0L948.1 1120.0ZM589.3 -5.0L592.3 -5.0L973.6 1120.0L971.8 1120.0ZM627.3 -5.0L630.2 -5.0L997.4 1120.0L995.6 1120.0ZM665.3 -5.0L668.2 -5.0L1021.1 1120.0L1019.3 1120.0ZM703.3 -5.0L706.1 -5.0L1044.9 1120.0L1043.1 1120.0ZM741.2 -5.0L744.1 -5.0L1068.6 1120.0L1066.8 1120.0ZM779.2 -5.0L782.0 -5.0L1092.4 1120.0L1090.6 1120.0ZM817.2 -5.0L820.0 -5.0L1116.1 1120.0L1114.4 1120.0ZM855.1 -5.0L858.0 -5.0L1139.9 1120.0L1138.1 1120.0ZM893.1 -5.0L895.9 -5.0L1163.6 1120.0L1161.9 1120.0ZM931.1 -5.0L933.9 -5.0L1187.4 1120.0L1185.6 1120.0ZM969.0 -5.0L971.8 -5.0L1211.1 1120.0L1209.4 1120.0ZM1007.0 -5.0L1009.8 -5.0L1234.9 1120.0L1233.1 1120.0ZM1045.0 -5.0L1047.8 -5.0L1258.6 1120.0L1256.9 1120.0ZM1082.9 -5.0L1085.7 -5.0L1282.4 1120.0L1280.6 1120.0ZM1120.9 -5.0L1123.7 -5.0L1306.1 1120.0L1304.4 1120.0ZM1158.9 -5.0L1161.6 -5.0L1329.9 1120.0L1328.1 1120.0ZM1196.8 -5.0L1199.6 -5.0L1353.6 1120.0L1351.9 1120.0ZM1234.8 -5.0L1237.6 -5.0L1377.4 1120.0L1375.6 1120.0ZM1272.8 -5.0L1275.5 -5.0L1401.1 1120.0L1399.4 1120.0ZM1310.7 -5.0L1313.5 -5.0L1424.9 1120.0L1423.1 1120.0ZM1348.7 -5.0L1351.4 -5.0L1448.6 1120.0L1446.9 1120.0ZM1386.6 -5.0L1389.4 -5.0L1472.4 1120.0L1470.6 1120.0ZM1424.6 -5.0L1427.4 -5.0L1496.1 1120.0L1494.4 1120.0ZM1462.6 -5.0L1465.3 -5.0L1519.9 1120.0L1518.1 1120.0ZM1500.5 -5.0L1503.3 -5.0L1543.6 1120.0L1541.9 1120.0ZM1538.5 -5.0L1541.3 -5.0L1567.4 1120.0L1565.6 1120.0ZM1576.5 -5.0L1579.2 -5.0L1591.1 1120.0L1589.4 1120.0ZM1614.4 -5.0L1617.2 -5.0L1614.9 1120.0L1613.1 1120.0ZM1652.4 -5.0L1655.1 -5.0L1638.6 1120.0L1636.9 1120.0ZM1690.4 -5.0L1693.1 -5.0L1662.4 1120.0L1660.6 1120.0ZM1728.3 -5.0L1731.1 -5.0L1686.1 1120.0L1684.4 1120.0ZM1766.3 -5.0L1769.0 -5.0L1709.9 1120.0L1708.1 1120.0ZM1804.2 -5.0L1807.0 -5.0L1733.6 1120.0L1731.9 1120.0ZM1842.2 -5.0L1845.0 -5.0L1757.4 1120.0L1755.6 1120.0ZM1880.2 -5.0L1882.9 -5.0L1781.1 1120.0L1779.4 1120.0ZM1918.1 -5.0L1920.9 -5.0L1804.9 1120.0L1803.1 1120.0ZM1956.1 -5.0L1958.9 -5.0L1828.6 1120.0L1826.9 1120.0ZM1994.1 -5.0L1996.8 -5.0L1852.4 1120.0L1850.6 1120.0ZM2032.0 -5.0L2034.8 -5.0L1876.1 1120.0L1874.4 1120.0ZM2070.0 -5.0L2072.8 -5.0L1899.9 1120.0L1898.1 1120.0ZM2107.9 -5.0L2110.7 -5.0L1923.6 1120.0L1921.9 1120.0ZM2145.9 -5.0L2148.7 -5.0L1947.4 1120.0L1945.6 1120.0ZM2183.9 -5.0L2186.7 -5.0L1971.1 1120.0L1969.4 1120.0ZM2221.8 -5.0L2224.6 -5.0L1994.9 1120.0L1993.1 1120.0ZM2259.8 -5.0L2262.6 -5.0L2018.7 1120.0L2016.9 1120.0ZM2297.7 -5.0L2300.6 -5.0L2042.4 1120.0L2040.6 1120.0ZM2335.7 -5.0L2338.5 -5.0L2066.2 1120.0L2064.4 1120.0ZM2373.7 -5.0L2376.5 -5.0L2089.9 1120.0L2088.1 1120.0ZM2411.6 -5.0L2414.5 -5.0L2113.7 1120.0L2111.9 1120.0ZM2449.6 -5.0L2452.4 -5.0L2137.4 1120.0L2135.6 1120.0ZM2487.5 -5.0L2490.4 -5.0L2161.2 1120.0L2159.4 1120.0ZM2525.5 -5.0L2528.4 -5.0L2184.9 1120.0L2183.1 1120.0ZM2563.4 -5.0L2566.3 -5.0L2208.7 1120.0L2206.9 1120.0ZM2601.4 -5.0L2604.3 -5.0L2232.4 1120.0L2230.6 1120.0ZM2639.4 -5.0L2642.3 -5.0L2256.2 1120.0L2254.4 1120.0ZM2677.3 -5.0L2680.2 -5.0L2279.9 1120.0L2278.1 1120.0ZM2715.3 -5.0L2718.2 -5.0L2303.7 1120.0L2301.9 1120.0ZM2753.2 -5.0L2756.2 -5.0L2327.4 1120.0L2325.6 1120.0ZM2791.2 -5.0L2794.1 -5.0L2351.2 1120.0L2349.4 1120.0ZM2829.1 -5.0L2832.1 -5.0L2375.0 1120.0L2373.1 1120.0ZM2867.1 -5.0L2870.1 -5.0L2398.7 1120.0L2396.8 1120.0ZM2905.1 -5.0L2908.1 -5.0L2422.5 1120.0L2420.6 1120.0ZM2943.0 -5.0L2946.0 -5.0L2446.2 1120.0L2444.3 1120.0ZM2981.0 -5.0L2984.0 -5.0L2470.0 1120.0L2468.1 1120.0ZM3018.9 -5.0L3022.0 -5.0L2493.7 1120.0L2491.8 1120.0ZM3056.9 -5.0L3059.9 -5.0L2517.5 1120.0L2515.6 1120.0ZM3094.8 -5.0L3097.9 -5.0L2541.2 1120.0L2539.3 1120.0ZM3132.8 -5.0L3135.9 -5.0L2565.0 1120.0L2563.1 1120.0ZM3170.7 -5.0L3173.8 -5.0L2588.8 1120.0L2586.8 1120.0ZM3208.7 -5.0L3211.8 -5.0L2612.5 1120.0L2610.6 1120.0ZM3246.7 -5.0L3249.8 -5.0L2636.3 1120.0L2634.3 1120.0ZM3284.6 -5.0L3287.8 -5.0L2660.0 1120.0L2658.1 1120.0ZM3322.6 -5.0L3325.7 -5.0L2683.8 1120.0L2681.8 1120.0ZM3360.5 -5.0L3363.7 -5.0L2707.5 1120.0L2705.5 1120.0ZM3398.5 -5.0L3401.7 -5.0L2731.3 1120.0L2729.3 1120.0ZM3436.4 -5.0L3439.7 -5.0L2755.0 1120.0L2753.0 1120.0ZM3474.4 -5.0L3477.6 -5.0L2778.8 1120.0L2776.8 1120.0ZM3512.3 -5.0L3515.6 -5.0L2802.6 1120.0L2800.5 1120.0Z" fill="#0a5f64"/>
<rect x="-321.7" y="-3.88" width="3837.1" height="2.75" fill="#0a5f64"/>
<rect x="-302.4" y="26.14" width="3798.8" height="2.72" fill="#0a5f64"/>
<rect x="-283.5" y="55.57" width="3761.3" height="2.70" fill="#0a5f64"/>
<rect x="-265.0" y="84.42" width="3724.5" height="2.67" fill="#0a5f64"/>
<rect x="-246.8" y="112.72" width="3688.4" height="2.65" fill="#0a5f64"/>
<rect x="-229.0" y="140.47" width="3653.0" height="2.62" fill="#0a5f64"/>
<rect x="-211.5" y="167.69" width="3618.3" height="2.60" fill="#0a5f64"/>
<rect x="-194.3" y="194.39" width="3584.2" height="2.57" fill="#0a5f64"/>
<rect x="-177.5" y="220.60" width="3550.8" height="2.55" fill="#0a5f64"/>
<rect x="-161.0" y="246.32" width="3518.0" height="2.52" fill="#0a5f64"/>
<rect x="-144.8" y="271.58" width="3485.8" height="2.50" fill="#0a5f64"/>
<rect x="-128.8" y="296.37" width="3454.2" height="2.48" fill="#0a5f64"/>
<rect x="-113.2" y="320.72" width="3423.1" height="2.45" fill="#0a5f64"/>
<rect x="-97.8" y="344.63" width="3392.6" height="2.43" fill="#0a5f64"/>
<rect x="-82.7" y="368.12" width="3362.7" height="2.41" fill="#0a5f64"/>
<rect x="-67.9" y="391.19" width="3333.2" height="2.39" fill="#0a5f64"/>
<rect x="-53.3" y="413.87" width="3304.3" height="2.37" fill="#0a5f64"/>
<rect x="-39.0" y="436.15" width="3275.9" height="2.35" fill="#0a5f64"/>
<rect x="-25.0" y="458.06" width="3247.9" height="2.33" fill="#0a5f64"/>
<rect x="-11.1" y="479.59" width="3220.5" height="2.31" fill="#0a5f64"/>
<rect x="2.5" y="500.76" width="3193.5" height="2.29" fill="#0a5f64"/>
<rect x="15.8" y="521.58" width="3166.9" height="2.27" fill="#0a5f64"/>
<rect x="29.0" y="542.05" width="3140.8" height="2.25" fill="#0a5f64"/>
<rect x="41.9" y="562.19" width="3115.1" height="2.23" fill="#0a5f64"/>
<rect x="54.7" y="582.00" width="3089.9" height="2.22" fill="#0a5f64"/>
<rect x="67.2" y="601.50" width="3065.0" height="2.20" fill="#0a5f64"/>
<rect x="79.5" y="620.68" width="3040.5" height="2.18" fill="#0a5f64"/>
<rect x="91.6" y="639.55" width="3016.5" height="2.16" fill="#0a5f64"/>
<rect x="103.6" y="658.13" width="2992.8" height="2.15" fill="#0a5f64"/>
<rect x="115.3" y="676.42" width="2969.5" height="2.13" fill="#0a5f64"/>
<rect x="126.9" y="694.42" width="2946.5" height="2.11" fill="#0a5f64"/>
<rect x="138.3" y="712.15" width="2923.9" height="2.10" fill="#0a5f64"/>
<rect x="149.5" y="729.61" width="2901.6" height="2.08" fill="#0a5f64"/>
<rect x="160.5" y="746.80" width="2879.7" height="2.06" fill="#0a5f64"/>
<rect x="171.4" y="763.74" width="2858.1" height="2.05" fill="#0a5f64"/>
<rect x="182.1" y="780.42" width="2836.8" height="2.03" fill="#0a5f64"/>
<rect x="192.7" y="796.86" width="2815.8" height="2.02" fill="#0a5f64"/>
<rect x="203.1" y="813.05" width="2795.2" height="2.00" fill="#0a5f64"/>
<rect x="213.3" y="829.01" width="2774.8" height="1.99" fill="#0a5f64"/>
<rect x="223.4" y="844.73" width="2754.8" height="1.97" fill="#0a5f64"/>
<rect x="233.4" y="860.23" width="2735.0" height="1.96" fill="#0a5f64"/>
<rect x="243.2" y="875.51" width="2715.5" height="1.95" fill="#0a5f64"/>
<rect x="252.9" y="890.57" width="2696.3" height="1.93" fill="#0a5f64"/>
<rect x="262.4" y="905.42" width="2677.4" height="1.92" fill="#0a5f64"/>
<rect x="271.8" y="920.07" width="2658.7" height="1.91" fill="#0a5f64"/>
<rect x="281.1" y="934.51" width="2640.3" height="1.89" fill="#0a5f64"/>
<rect x="290.3" y="948.75" width="2622.1" height="1.88" fill="#0a5f64"/>
<rect x="299.3" y="962.79" width="2604.2" height="1.87" fill="#0a5f64"/>
<rect x="308.2" y="976.64" width="2586.6" height="1.85" fill="#0a5f64"/>
<rect x="317.0" y="990.31" width="2569.1" height="1.84" fill="#0a5f64"/>
<rect x="325.6" y="1003.79" width="2551.9" height="1.83" fill="#0a5f64"/>
<rect x="334.2" y="1017.10" width="2535.0" height="1.82" fill="#0a5f64"/>
<rect x="342.6" y="1030.23" width="2518.2" height="1.80" fill="#0a5f64"/>
<rect x="350.9" y="1043.18" width="2501.7" height="1.79" fill="#0a5f64"/>
<rect x="359.1" y="1055.97" width="2485.4" height="1.78" fill="#0a5f64"/>
<rect x="367.2" y="1068.59" width="2469.3" height="1.77" fill="#0a5f64"/>
<rect x="375.3" y="1081.04" width="2453.4" height="1.76" fill="#0a5f64"/>
<rect x="383.2" y="1093.34" width="2437.7" height="1.75" fill="#0a5f64"/>
<rect x="390.9" y="1105.48" width="2422.2" height="1.74" fill="#0a5f64"/>
<rect x="398.6" y="1117.47" width="2406.9" height="1.72" fill="#0a5f64"/></g></g></g>
<rect x="1052.2" y="223.9" width="1096.5" height="728.3" rx="50" fill="#000" stroke="#0cbac4" stroke-width="3.8"/>
<circle cx="576.2" cy="984.8" r="165.4" fill="#000" stroke="#0cbac4" stroke-width="3.8"/>
<path d="M1052.2 581.3H576.2V819.4M576.2 1150.2V1499H805M2148.7 588H2625.2V843M2625.2 1153V1499H2400.7" fill="none" stroke="#0cbac4" stroke-width="3.8"/>
<rect x="805" y="1010" width="1595.7" height="978" rx="50" fill="none" stroke="#0cbac4" stroke-width="3.8"/>
<use href="#human" transform="translate(514.6 859) scale(1.0719 1.0711)" fill="#0cbac4"/>
<ellipse cx="2628" cy="995.7" rx="166.3" ry="70.7" fill="#000" stroke="#0cbac4" stroke-width="3"/>
<rect x="2596" y="918" width="18" height="14" fill="#000"/><rect x="2641.5" y="1059" width="18.5" height="14" fill="#000"/>
<path d="M2668.9 883.9Q2646.4 920.7 2614.3 924.6Q2646.4 928.5 2668.9 965.3M2586 1026.8Q2608.5 1062.6 2641 1066.5Q2608.5 1070.4 2586 1106.2" fill="none" stroke="#0cbac4" stroke-width="3" stroke-linecap="round"/>
<g fill="#0cbac4">
<path d="M698 1615Q698 1608 704 1612L733 1636Q738 1641 733 1646L704 1670Q698 1674 698 1667V1653Q676 1652 665 1665Q659 1673 664 1684Q667 1691 660 1688Q641 1674 646 1652Q654 1627 698 1627Z"/>
<path d="M650.5 1731.6H680.7L691.8 1741.7H730.5Q735.3 1741.7 735.3 1746.5V1752.9H645.9V1736.2Q645.9 1731.6 650.5 1731.6Z"/><rect x="645.9" y="1759" width="89.4" height="49.5" rx="5"/>
<path d="M650 1851H731Q736.3 1851 736.3 1856.5V1861.5L694.5 1892.5Q690.5 1895.5 686.5 1892.5L644.7 1861.5V1856.5Q644.7 1851 650 1851Z"/><path d="M644.7 1869.5L686 1899.5Q690.5 1903 695 1899.5L736.3 1869.5V1914.5Q736.3 1919.8 731 1919.8H650Q644.7 1919.8 644.7 1914.5Z"/>
<path d="M2528.5 1689.6V1656.7H2515.4V1642H2528.5V1632Q2528.5 1613.3 2547 1613.3H2556.5V1626.5H2550Q2544 1626.5 2544 1633V1642H2556.5L2554.5 1656.7H2544V1689.6Z"/>
</g>
<rect x="2500.6" y="1735.3" width="71" height="71" rx="19" fill="none" stroke="#0cbac4" stroke-width="7"/>
<circle cx="2536.2" cy="1770.2" r="16.4" fill="none" stroke="#0cbac4" stroke-width="7"/><circle cx="2557.5" cy="1749.4" r="4.6" fill="#0cbac4"/>
<path transform="translate(2490.8 1842.1) scale(3.78 3.83)" fill="#0cbac4" d="M23.953 4.57a10 10 0 01-2.825.775 4.958 4.958 0 002.163-2.723c-.951.555-2.005.959-3.127 1.184a4.92 4.92 0 00-8.384 4.482C7.69 8.095 4.067 6.13 1.64 3.162a4.822 4.822 0 00-.666 2.475c0 1.71.87 3.213 2.188 4.096a4.904 4.904 0 01-2.228-.616v.06a4.923 4.923 0 003.946 4.827 4.996 4.996 0 01-2.212.085 4.936 4.936 0 004.604 3.417 9.867 9.867 0 01-6.102 2.105c-.39 0-.779-.023-1.17-.067a13.995 13.995 0 007.557 2.209c9.053 0 13.998-7.496 13.998-13.985 0-.21 0-.42-.015-.63A9.935 9.935 0 0024 4.59z"/>
<g id="ipad">
<rect x="1161" y="243.5" width="903.5" height="690.5" rx="40" fill="#cdcdcd"/>
<rect x="1164" y="246.5" width="897.5" height="684.5" rx="37" fill="#131313"/>
<path d="M1164 742H2061.5V894.5Q2061.5 931 2024.5 931H1201Q1164 931 1164 894.5Z" fill="#2a2a2a"/>
<path d="M1188 290H2036V892Q2036 907 2021 907H1203Q1188 907 1188 892Z" fill="url(#canvasG)"/>
<g transform="translate(1495.2 337) scale(2.5000 2.4267)"><g clip-path="url(#hclip)"><use href="#human3d" fill="url(#figG2)"/><use href="#human3d" fill="none" stroke="#70707c" stroke-width="4" opacity="0.7" filter="url(#fblur)"/></g></g>
<path d="M1199 271H2024Q2036 271 2036 283V297.5H1187V283Q1187 271 1199 271Z" fill="#1d1e22"/>
<text x="1198.0" y="289.0" font-size="12.50" fill="#b4b4b4" textLength="35.0" lengthAdjust="spacingAndGlyphs" >Gallery</text>
<circle cx="1256" cy="284" r="10" fill="#1b6fe3"/>
<path d="M1250 290L1257 283M1256 279.5a3.2 3.2 0 1 0 4 4" stroke="#e8e8e8" stroke-width="2" fill="none" stroke-linecap="round"/>
<circle cx="1291.5" cy="284.2" r="10" fill="#111113"/>
<circle cx="1327.3" cy="284.2" r="10" fill="#111113"/>
<circle cx="1363.1" cy="284.2" r="10" fill="#111113"/>
<path d="M1287 289L1296 280M1294 279v2M1297 282h-2" stroke="#9a9a9a" stroke-width="1.6" fill="none"/>
<path d="M1330 279.5Q1324 279 1324.5 282Q1326 284 1329 285Q1331 287.5 1325 288.5M1322 291H1327" stroke="#9a9a9a" stroke-width="1.5" fill="none"/>
<path d="M1358.5 289.5L1367 280.5M1362 280.5H1367V285.5" stroke="#9a9a9a" stroke-width="1.6" fill="none"/>
<circle cx="1607.5" cy="277.7" r="1.4" fill="#8c8c8c"/>
<circle cx="1611.7" cy="277.7" r="1.4" fill="#8c8c8c"/>
<circle cx="1615.9" cy="277.7" r="1.4" fill="#8c8c8c"/>
<path d="M1840 291Q1843 290 1845 287L1856 276.5Q1857 275.5 1856 277L1847 289Q1844 292 1840 291Z" fill="#9c9c9c"/>
<path d="M1886 291L1890 284Q1886 281 1889 278Q1893 275 1897 277L1898 279L1893 287L1889 291Z" fill="#9c9c9c"/>
<path d="M1927.5 286.5L1938 276.5Q1941 275 1943 278L1944 279Q1944.5 282 1942.5 283L1933 290.5Z" fill="#9c9c9c"/>
<rect x="1972" y="279.5" width="10.5" height="10.5" rx="1" fill="#9c9c9c"/><path d="M1976.5 277V276Q1976.5 275.5 1977 275.5H1985.5Q1986.5 275.5 1986.5 276.5V285.5Q1986.5 286.5 1985.5 286.5H1984" stroke="#9c9c9c" stroke-width="1.6" fill="none"/>
<circle cx="2022.9" cy="283" r="9.3" fill="#000" stroke="#7a7a7a" stroke-width="0.8"/>
<path d="M1188 338.9H1208Q1212.5 338.9 1212.5 343.4V657.3Q1212.5 661.8 1208 661.8H1188Z" fill="#1b1b1d"/>
<rect x="1189.6" y="340" width="21.4" height="106" rx="2" fill="#2c2d31"/>
<rect x="1189.6" y="397" width="21" height="10.3" rx="2.5" fill="#a2a2a2"/>
<rect x="1194.3" y="466.3" width="11.5" height="11.5" rx="2.5" fill="none" stroke="#9a9a9a" stroke-width="1.3"/>
<rect x="1189.6" y="498" width="21.4" height="106" rx="2" fill="#2c2d31"/>
<rect x="1189.6" y="498" width="21" height="10.5" rx="2.5" fill="#a2a2a2"/>
<path d="M1196 621L1199 618.5M1196 621L1199 623.5M1196 621H1203Q1206 621 1206 624Q1206 627 1203 627" stroke="#3d3d40" stroke-width="1.2" fill="none"/>
<path d="M1206 645L1203 642.5M1206 645L1203 647.5M1206 645H1199Q1196 645 1196 648Q1196 651 1199 651" stroke="#3d3d40" stroke-width="1.2" fill="none"/>
<path d="M1228 307.6H1247.8L1257.3 299.5L1266.8 307.6H1454.2Q1462.2 307.6 1462.2 315.6V776.4Q1462.2 784.4 1454.2 784.4H1228Q1220 784.4 1220 776.4V315.6Q1220 307.6 1228 307.6Z" fill="#2a2a2e"/>
<text x="1235.4" y="335.9" font-size="17.50" fill="#c9c9c9" font-weight="bold" textLength="61.0" lengthAdjust="spacingAndGlyphs" >Actions</text>
<text x="1243.0" y="375.8" font-size="7.20" fill="#8d8d8d" text-anchor="middle" >Add</text>
<text x="1282.7" y="375.8" font-size="7.20" fill="#8d8d8d" text-anchor="middle" >Canvas</text>
<text x="1322.5" y="375.8" font-size="7.20" fill="#e0e0e0" text-anchor="middle" >Share</text>
<text x="1362.5" y="375.8" font-size="7.20" fill="#8d8d8d" text-anchor="middle" >3D</text>
<text x="1402.5" y="375.8" font-size="7.20" fill="#8d8d8d" text-anchor="middle" >Prefs</text>
<text x="1442.1" y="375.8" font-size="7.20" fill="#8d8d8d" text-anchor="middle" >Help</text>
<rect x="1236" y="352.5" width="10" height="10" rx="2" fill="#8a8a8a"/><rect x="1239.5" y="355.5" width="9.5" height="9.5" rx="2" fill="#9a9a9a" stroke="#2a2a2e" stroke-width="0.8"/><path d="M1244.2 357.5V363M1241.5 360.2H1247" stroke="#555" stroke-width="0.8"/>
<rect x="1274" y="352" width="17.5" height="12.5" rx="1.8" fill="#9a9a9a"/><path d="M1280 355V361M1280 355.5Q1283 355.5 1283 358V360.5Q1283 362 1285 361.5" stroke="#3a3a3a" stroke-width="1.1" fill="none"/>
<path d="M1316.5 356H1320V361H1325V356H1328.5V364.5Q1328.5 365.5 1327.5 365.5H1317.5Q1316.5 365.5 1316.5 364.5Z" fill="#1a72e8"/><path d="M1322.5 360V350.5M1319.8 353L1322.5 350.3L1325.2 353" stroke="#1a72e8" stroke-width="1.6" fill="none"/>
<path d="M1362.5 350L1369 353.8V361.3L1362.5 365L1356 361.3V353.8ZM1356 353.8L1362.5 357.5L1369 353.8M1362.5 357.5V365" stroke="#8d8d8d" stroke-width="1" fill="none"/>
<rect x="1393" y="353" width="19" height="10" rx="5" fill="#8f8f8f"/><circle cx="1407" cy="358" r="3.8" fill="#2a2a2e"/>
<circle cx="1442.1" cy="357.8" r="6.6" fill="#8d8d8d"/><text x="1442.1" y="361.2" font-size="9" font-weight="bold" fill="#2a2a2e" text-anchor="middle">?</text>
<text x="1235.6" y="403.3" font-size="8.80" fill="#cfcfcf" font-weight="bold" textLength="52.0" lengthAdjust="spacingAndGlyphs" >Share Model</text>
<rect x="1228.8" y="416.9" width="226.6" height="24.6" rx="2" fill="#232327"/>
<text x="1236.9" y="432.5" font-size="10.60" fill="#b8b8b8" >Procreate</text>
<rect x="1228.8" y="443.3" width="226.6" height="24.6" rx="2" fill="#232327"/>
<text x="1236.9" y="458.9" font-size="10.60" fill="#b8b8b8" >USDZ</text>
<rect x="1228.8" y="469.0" width="226.6" height="24.6" rx="2" fill="#232327"/>
<text x="1236.9" y="484.6" font-size="10.60" fill="#b8b8b8" >OBJ</text>
<text x="1236.7" y="520.0" font-size="8.80" fill="#cfcfcf" font-weight="bold" textLength="53.0" lengthAdjust="spacingAndGlyphs" >Share Image</text>
<rect x="1228.8" y="533.3" width="226.6" height="24.6" rx="2" fill="#232327"/>
<text x="1236.9" y="548.9" font-size="10.60" fill="#b8b8b8" >JPEG</text>
<rect x="1228.8" y="559.0" width="226.6" height="24.6" rx="2" fill="#232327"/>
<text x="1236.9" y="574.6" font-size="10.60" fill="#b8b8b8" >PNG</text>
<rect x="1228.8" y="584.8" width="226.6" height="24.6" rx="2" fill="#232327"/>
<text x="1236.9" y="600.4" font-size="10.60" fill="#b8b8b8" >TIFF</text>
<rect x="1228.8" y="611.5" width="226.6" height="24.6" rx="2" fill="#232327"/>
<text x="1236.9" y="627.1" font-size="10.60" fill="#b8b8b8" >Animated GIF</text>
<rect x="1228.8" y="637.2" width="226.6" height="24.6" rx="2" fill="#232327"/>
<text x="1236.9" y="652.8" font-size="10.60" fill="#b8b8b8" >Animated PNG</text>
<rect x="1228.8" y="663.0" width="226.6" height="24.6" rx="2" fill="#232327"/>
<text x="1236.9" y="678.6" font-size="10.60" fill="#b8b8b8" >Animated MP4</text>
<rect x="1228.8" y="689.6" width="226.6" height="24.6" rx="2" fill="#232327"/>
<text x="1236.9" y="705.2" font-size="10.60" fill="#b8b8b8" >Animated HEVC</text>
<text x="1237.5" y="740.4" font-size="8.80" fill="#cfcfcf" font-weight="bold" textLength="64.0" lengthAdjust="spacingAndGlyphs" >Share Textures</text>
<rect x="1228.8" y="754.3" width="226.6" height="24.6" rx="2" fill="#232327"/>
<text x="1236.9" y="769.9" font-size="10.60" fill="#b8b8b8" >PNG</text>
</g>
<rect x="1229.4" y="610.3" width="229.8" height="105" fill="none" stroke="#0cbac4" stroke-width="4.6"/>
<path d="M1339.4 717V1010" stroke="#0cbac4" stroke-width="3.8"/>
<rect x="817" y="1022" width="1571.5" height="953.5" rx="42" fill="#1e1e1e"/>
<circle cx="1593.7" cy="1027" r="3" fill="#8f8f8f"/>
<circle cx="1603.3" cy="1027" r="3" fill="#8f8f8f"/>
<circle cx="1612.8" cy="1027" r="3" fill="#8f8f8f"/>
<text x="837.5" y="1083.0" font-size="33.00" fill="#bdbdbd" font-weight="bold" textLength="204.0" lengthAdjust="spacingAndGlyphs" >Animated GIF</text>
<text x="1557.6" y="1061.3" font-size="23.50" fill="#c8c8c8" font-weight="bold" textLength="324.0" lengthAdjust="spacingAndGlyphs" >Simon_FullBody_TattooSmart</text>
<text x="1692.7" y="1087.8" font-size="14.00" fill="#a2a2a2" textLength="54.4" lengthAdjust="spacingAndGlyphs" >33.2 MB</text>
<text x="2180.5" y="1071.8" font-size="20.00" fill="#a8a8a8" textLength="59.7" lengthAdjust="spacingAndGlyphs" >Cancel</text>
<rect x="2292.8" y="1045.9" width="86.8" height="37.8" rx="10" fill="#fea20b"/>
<text x="2308.0" y="1072.0" font-size="19.50" fill="#1c1c1c" textLength="56.0" lengthAdjust="spacingAndGlyphs" >Export</text>
<rect x="833.2" y="1126.5" width="417.8" height="39.3" rx="9" fill="#2d2d2f"/>
<rect x="834.7" y="1128.5" width="200" height="35.3" rx="8" fill="#0b7bff"/>
<text x="881.0" y="1152.0" font-size="16.00" fill="#ffffff" textLength="107.0" lengthAdjust="spacingAndGlyphs" >Max Resolution</text>
<text x="1109.0" y="1152.0" font-size="16.00" fill="#d2d2d2" textLength="79.0" lengthAdjust="spacingAndGlyphs" >Web Ready</text>
<text x="833.0" y="1210.6" font-size="20.00" fill="#e2e2e2" textLength="80.0" lengthAdjust="spacingAndGlyphs" >Dithering</text>
<rect x="1193.5" y="1185.5" width="59.5" height="35.7" rx="17.85" fill="#0b7bff"/>
<circle cx="1235" cy="1203.3" r="15.8" fill="#c6c6c6"/>
<text x="833.0" y="1271.2" font-size="20.00" fill="#e2e2e2" textLength="212.0" lengthAdjust="spacingAndGlyphs" >Per frame colour palette</text>
<rect x="1193.5" y="1245.8" width="59.5" height="35.7" rx="17.85" fill="#3b3b3d"/>
<circle cx="1211.8" cy="1263.6" r="15.8" fill="#c0c0c0"/>
<path d="M839.8 1314.4H1243Q1251 1314.4 1251 1322.4V1361.6H831.8V1322.4Q831.8 1314.4 839.8 1314.4Z" fill="#0b7bff"/>
<text x="851.5" y="1345.3" font-size="20.00" fill="#ffffff" textLength="140.0" lengthAdjust="spacingAndGlyphs" >Animated rotate</text>
<circle cx="1224" cy="1338.2" r="10.8" fill="#fff"/><path d="M1219 1338.5L1222.5 1342L1229 1334.5" stroke="#0b7bff" stroke-width="2.6" fill="none" stroke-linecap="round" stroke-linejoin="round"/>
<path d="M831.8 1362H1251V1401Q1251 1409 1243 1409H839.8Q831.8 1409 831.8 1401Z" fill="#262626"/>
<text x="851.5" y="1392.7" font-size="20.00" fill="#e2e2e2" textLength="140.0" lengthAdjust="spacingAndGlyphs" >Animated swing</text>
<text x="833.0" y="1460.7" font-size="20.00" fill="#e2e2e2" textLength="164.0" lengthAdjust="spacingAndGlyphs" >Animation duration</text>
<text x="1244.4" y="1460.7" font-size="20.00" fill="#a9a9a9" text-anchor="end" >2</text>
<rect x="831.8" y="1479.0" width="419.2" height="4" rx="2" fill="#38383a"/>
<rect x="831.8" y="1479.0" width="141.9" height="4" rx="2" fill="#0b7bff"/>
<circle cx="973.7" cy="1481.0" r="6.2" fill="#0b7bff"/>
<text x="833.0" y="1532.4" font-size="20.00" fill="#e2e2e2" textLength="129.0" lengthAdjust="spacingAndGlyphs" >Zoom distance</text>
<text x="1244.4" y="1532.4" font-size="20.00" fill="#a9a9a9" text-anchor="end" >50%</text>
<rect x="831.8" y="1551.3" width="419.2" height="4" rx="2" fill="#38383a"/>
<rect x="831.8" y="1551.3" width="209.0" height="4" rx="2" fill="#0b7bff"/>
<circle cx="1040.8" cy="1553.3" r="6.2" fill="#0b7bff"/>
<text x="833.0" y="1604.2" font-size="20.00" fill="#e2e2e2" textLength="41.0" lengthAdjust="spacingAndGlyphs" >Ease</text>
<text x="1244.4" y="1604.2" font-size="20.00" fill="#a9a9a9" text-anchor="end" >100%</text>
<rect x="831.8" y="1623.6" width="419.2" height="4" rx="2" fill="#38383a"/>
<rect x="831.8" y="1623.6" width="413.6" height="4" rx="2" fill="#0b7bff"/>
<circle cx="1245.4" cy="1625.6" r="6.2" fill="#0b7bff"/>
<text x="833.0" y="1688.7" font-size="20.00" fill="#e2e2e2" textLength="163.0" lengthAdjust="spacingAndGlyphs" >Show environment</text>
<rect x="1193.5" y="1663.2" width="59.5" height="35.7" rx="17.85" fill="#0b7bff"/>
<circle cx="1235" cy="1681.0" r="15.8" fill="#c6c6c6"/>
<rect x="1320.5" y="1365.9" width="1030.8" height="579" fill="url(#prevG)"/>
<rect x="1320.5" y="1365.9" width="1030.8" height="579" fill="url(#prevH)"/>
<g transform="translate(1754.5 1496) scale(1.4474 1.4342)"><g clip-path="url(#hclip)"><use href="#human3d" fill="url(#figG)"/><use href="#human3d" fill="none" stroke="#8a8a96" stroke-width="5" opacity="0.6" filter="url(#fblur)"/></g></g>
<g stroke-linejoin="miter" stroke-miterlimit="4">
<g transform="translate(250.40 0) scale(1.5950 1)" font-size="142.80"><text y="2210.78" fill="#1fe0ea" stroke="#1fe0ea" stroke-width="14.48" vector-effect="non-scaling-stroke">S</text><text y="2212.42" fill="#1fe0ea" stroke="#1fe0ea" stroke-width="14.48" vector-effect="non-scaling-stroke">S</text><text y="2214.06" fill="#1fe0ea" stroke="#1fe0ea" stroke-width="14.48" vector-effect="non-scaling-stroke">S</text><text y="2210.78" fill="#000" stroke="#000" stroke-width="7.28" vector-effect="non-scaling-stroke">S</text><text y="2212.42" fill="#000" stroke="#000" stroke-width="7.28" vector-effect="non-scaling-stroke">S</text><text y="2214.06" fill="#000" stroke="#000" stroke-width="7.28" vector-effect="non-scaling-stroke">S</text></g>
<g transform="translate(394.71 0) scale(1.6551 1)" font-size="142.80"><text y="2210.78" fill="#1fe0ea" stroke="#1fe0ea" stroke-width="14.48" vector-effect="non-scaling-stroke">H</text><text y="2212.42" fill="#1fe0ea" stroke="#1fe0ea" stroke-width="14.48" vector-effect="non-scaling-stroke">H</text><text y="2214.06" fill="#1fe0ea" stroke="#1fe0ea" stroke-width="14.48" vector-effect="non-scaling-stroke">H</text><text y="2210.78" fill="#000" stroke="#000" stroke-width="7.28" vector-effect="non-scaling-stroke">H</text><text y="2212.42" fill="#000" stroke="#000" stroke-width="7.28" vector-effect="non-scaling-stroke">H</text><text y="2214.06" fill="#000" stroke="#000" stroke-width="7.28" vector-effect="non-scaling-stroke">H</text></g>
<g transform="translate(564.99 0) scale(1.5780 1)" font-size="142.80"><text y="2210.78" fill="#1fe0ea" stroke="#1fe0ea" stroke-width="14.48" vector-effect="non-scaling-stroke">A</text><text y="2212.42" fill="#1fe0ea" stroke="#1fe0ea" stroke-width="14.48" vector-effect="non-scaling-stroke">A</text><text y="2214.06" fill="#1fe0ea" stroke="#1fe0ea" stroke-width="14.48" vector-effect="non-scaling-stroke">A</text><text y="2210.78" fill="#000" stroke="#000" stroke-width="7.28" vector-effect="non-scaling-stroke">A</text><text y="2212.42" fill="#000" stroke="#000" stroke-width="7.28" vector-effect="non-scaling-stroke">A</text><text y="2214.06" fill="#000" stroke="#000" stroke-width="7.28" vector-effect="non-scaling-stroke">A</text></g>
<g transform="translate(718.39 0) scale(1.4391 1)" font-size="142.80"><text y="2210.78" fill="#1fe0ea" stroke="#1fe0ea" stroke-width="14.48" vector-effect="non-scaling-stroke">R</text><text y="2212.42" fill="#1fe0ea" stroke="#1fe0ea" stroke-width="14.48" vector-effect="non-scaling-stroke">R</text><text y="2214.06" fill="#1fe0ea" stroke="#1fe0ea" stroke-width="14.48" vector-effect="non-scaling-stroke">R</text><text y="2210.78" fill="#000" stroke="#000" stroke-width="7.28" vector-effect="non-scaling-stroke">R</text><text y="2212.42" fill="#000" stroke="#000" stroke-width="7.28" vector-effect="non-scaling-stroke">R</text><text y="2214.06" fill="#000" stroke="#000" stroke-width="7.28" vector-effect="non-scaling-stroke">R</text></g>
<g transform="translate(867.38 0) scale(1.3672 1)" font-size="142.80"><text y="2210.78" fill="#1fe0ea" stroke="#1fe0ea" stroke-width="14.48" vector-effect="non-scaling-stroke">E</text><text y="2212.42" fill="#1fe0ea" stroke="#1fe0ea" stroke-width="14.48" vector-effect="non-scaling-stroke">E</text><text y="2214.06" fill="#1fe0ea" stroke="#1fe0ea" stroke-width="14.48" vector-effect="non-scaling-stroke">E</text><text y="2210.78" fill="#000" stroke="#000" stroke-width="7.28" vector-effect="non-scaling-stroke">E</text><text y="2212.42" fill="#000" stroke="#000" stroke-width="7.28" vector-effect="non-scaling-stroke">E</text><text y="2214.06" fill="#000" stroke="#000" stroke-width="7.28" vector-effect="non-scaling-stroke">E</text></g>
<g transform="translate(1054.55 0) scale(1.7893 1)" font-size="142.80"><text y="2210.78" fill="#1fe0ea" stroke="#1fe0ea" stroke-width="14.48" vector-effect="non-scaling-stroke">M</text><text y="2212.42" fill="#1fe0ea" stroke="#1fe0ea" stroke-width="14.48" vector-effect="non-scaling-stroke">M</text><text y="2214.06" fill="#1fe0ea" stroke="#1fe0ea" stroke-width="14.48" vector-effect="non-scaling-stroke">M</text><text y="2210.78" fill="#000" stroke="#000" stroke-width="7.28" vector-effect="non-scaling-stroke">M</text><text y="2212.42" fill="#000" stroke="#000" stroke-width="7.28" vector-effect="non-scaling-stroke">M</text><text y="2214.06" fill="#000" stroke="#000" stroke-width="7.28" vector-effect="non-scaling-stroke">M</text></g>
<g transform="translate(1257.50 0) scale(1.4477 1)" font-size="142.80"><text y="2210.78" fill="#1fe0ea" stroke="#1fe0ea" stroke-width="14.48" vector-effect="non-scaling-stroke">O</text><text y="2212.42" fill="#1fe0ea" stroke="#1fe0ea" stroke-width="14.48" vector-effect="non-scaling-stroke">O</text><text y="2214.06" fill="#1fe0ea" stroke="#1fe0ea" stroke-width="14.48" vector-effect="non-scaling-stroke">O</text><text y="2210.78" fill="#000" stroke="#000" stroke-width="7.28" vector-effect="non-scaling-stroke">O</text><text y="2212.42" fill="#000" stroke="#000" stroke-width="7.28" vector-effect="non-scaling-stroke">O</text><text y="2214.06" fill="#000" stroke="#000" stroke-width="7.28" vector-effect="non-scaling-stroke">O</text></g>
<g transform="translate(1411.70 0) scale(1.4581 1)" font-size="142.80"><text y="2210.78" fill="#1fe0ea" stroke="#1fe0ea" stroke-width="14.48" vector-effect="non-scaling-stroke">D</text><text y="2212.42" fill="#1fe0ea" stroke="#1fe0ea" stroke-width="14.48" vector-effect="non-scaling-stroke">D</text><text y="2214.06" fill="#1fe0ea" stroke="#1fe0ea" stroke-width="14.48" vector-effect="non-scaling-stroke">D</text><text y="2210.78" fill="#000" stroke="#000" stroke-width="7.28" vector-effect="non-scaling-stroke">D</text><text y="2212.42" fill="#000" stroke="#000" stroke-width="7.28" vector-effect="non-scaling-stroke">D</text><text y="2214.06" fill="#000" stroke="#000" stroke-width="7.28" vector-effect="non-scaling-stroke">D</text></g>
<g transform="translate(1560.69 0) scale(1.3698 1)" font-size="142.80"><text y="2210.78" fill="#1fe0ea" stroke="#1fe0ea" stroke-width="14.48" vector-effect="non-scaling-stroke">E</text><text y="2212.42" fill="#1fe0ea" stroke="#1fe0ea" stroke-width="14.48" vector-effect="non-scaling-stroke">E</text><text y="2214.06" fill="#1fe0ea" stroke="#1fe0ea" stroke-width="14.48" vector-effect="non-scaling-stroke">E</text><text y="2210.78" fill="#000" stroke="#000" stroke-width="7.28" vector-effect="non-scaling-stroke">E</text><text y="2212.42" fill="#000" stroke="#000" stroke-width="7.28" vector-effect="non-scaling-stroke">E</text><text y="2214.06" fill="#000" stroke="#000" stroke-width="7.28" vector-effect="non-scaling-stroke">E</text></g>
<g transform="translate(1689.98 0) scale(1.5981 1)" font-size="142.80"><text y="2210.78" fill="#1fe0ea" stroke="#1fe0ea" stroke-width="14.48" vector-effect="non-scaling-stroke">L</text><text y="2212.42" fill="#1fe0ea" stroke="#1fe0ea" stroke-width="14.48" vector-effect="non-scaling-stroke">L</text><text y="2214.06" fill="#1fe0ea" stroke="#1fe0ea" stroke-width="14.48" vector-effect="non-scaling-stroke">L</text><text y="2210.78" fill="#000" stroke="#000" stroke-width="7.28" vector-effect="non-scaling-stroke">L</text><text y="2212.42" fill="#000" stroke="#000" stroke-width="7.28" vector-effect="non-scaling-stroke">L</text><text y="2214.06" fill="#000" stroke="#000" stroke-width="7.28" vector-effect="non-scaling-stroke">L</text></g>
<g transform="translate(1875.11 0) scale(1.4297 1)" font-size="142.80"><text y="2210.78" fill="#1fe0ea" stroke="#1fe0ea" stroke-width="14.48" vector-effect="non-scaling-stroke">R</text><text y="2212.42" fill="#1fe0ea" stroke="#1fe0ea" stroke-width="14.48" vector-effect="non-scaling-stroke">R</text><text y="2214.06" fill="#1fe0ea" stroke="#1fe0ea" stroke-width="14.48" vector-effect="non-scaling-stroke">R</text><text y="2210.78" fill="#000" stroke="#000" stroke-width="7.28" vector-effect="non-scaling-stroke">R</text><text y="2212.42" fill="#000" stroke="#000" stroke-width="7.28" vector-effect="non-scaling-stroke">R</text><text y="2214.06" fill="#000" stroke="#000" stroke-width="7.28" vector-effect="non-scaling-stroke">R</text></g>
<g transform="translate(2024.74 0) scale(1.4108 1)" font-size="142.80"><text y="2210.78" fill="#1fe0ea" stroke="#1fe0ea" stroke-width="14.48" vector-effect="non-scaling-stroke">O</text><text y="2212.42" fill="#1fe0ea" stroke="#1fe0ea" stroke-width="14.48" vector-effect="non-scaling-stroke">O</text><text y="2214.06" fill="#1fe0ea" stroke="#1fe0ea" stroke-width="14.48" vector-effect="non-scaling-stroke">O</text><text y="2210.78" fill="#000" stroke="#000" stroke-width="7.28" vector-effect="non-scaling-stroke">O</text><text y="2212.42" fill="#000" stroke="#000" stroke-width="7.28" vector-effect="non-scaling-stroke">O</text><text y="2214.06" fill="#000" stroke="#000" stroke-width="7.28" vector-effect="non-scaling-stroke">O</text></g>
<g transform="translate(2181.46 0) scale(1.5682 1)" font-size="142.80"><text y="2210.78" fill="#1fe0ea" stroke="#1fe0ea" stroke-width="14.48" vector-effect="non-scaling-stroke">T</text><text y="2212.42" fill="#1fe0ea" stroke="#1fe0ea" stroke-width="14.48" vector-effect="non-scaling-stroke">T</text><text y="2214.06" fill="#1fe0ea" stroke="#1fe0ea" stroke-width="14.48" vector-effect="non-scaling-stroke">T</text><text y="2210.78" fill="#000" stroke="#000" stroke-width="7.28" vector-effect="non-scaling-stroke">T</text><text y="2212.42" fill="#000" stroke="#000" stroke-width="7.28" vector-effect="non-scaling-stroke">T</text><text y="2214.06" fill="#000" stroke="#000" stroke-width="7.28" vector-effect="non-scaling-stroke">T</text></g>
<g transform="translate(2303.22 0) scale(1.5780 1)" font-size="142.80"><text y="2210.78" fill="#1fe0ea" stroke="#1fe0ea" stroke-width="14.48" vector-effect="non-scaling-stroke">A</text><text y="2212.42" fill="#1fe0ea" stroke="#1fe0ea" stroke-width="14.48" vector-effect="non-scaling-stroke">A</text><text y="2214.06" fill="#1fe0ea" stroke="#1fe0ea" stroke-width="14.48" vector-effect="non-scaling-stroke">A</text><text y="2210.78" fill="#000" stroke="#000" stroke-width="7.28" vector-effect="non-scaling-stroke">A</text><text y="2212.42" fill="#000" stroke="#000" stroke-width="7.28" vector-effect="non-scaling-stroke">A</text><text y="2214.06" fill="#000" stroke="#000" stroke-width="7.28" vector-effect="non-scaling-stroke">A</text></g>
<g transform="translate(2438.17 0) scale(1.5558 1)" font-size="142.80"><text y="2210.78" fill="#1fe0ea" stroke="#1fe0ea" stroke-width="14.48" vector-effect="non-scaling-stroke">T</text><text y="2212.42" fill="#1fe0ea" stroke="#1fe0ea" stroke-width="14.48" vector-effect="non-scaling-stroke">T</text><text y="2214.06" fill="#1fe0ea" stroke="#1fe0ea" stroke-width="14.48" vector-effect="non-scaling-stroke">T</text><text y="2210.78" fill="#000" stroke="#000" stroke-width="7.28" vector-effect="non-scaling-stroke">T</text><text y="2212.42" fill="#000" stroke="#000" stroke-width="7.28" vector-effect="non-scaling-stroke">T</text><text y="2214.06" fill="#000" stroke="#000" stroke-width="7.28" vector-effect="non-scaling-stroke">T</text></g>
<g transform="translate(2573.36 0) scale(1.5108 1)" font-size="142.80"><text y="2210.78" fill="#1fe0ea" stroke="#1fe0ea" stroke-width="14.48" vector-effect="non-scaling-stroke">I</text><text y="2212.42" fill="#1fe0ea" stroke="#1fe0ea" stroke-width="14.48" vector-effect="non-scaling-stroke">I</text><text y="2214.06" fill="#1fe0ea" stroke="#1fe0ea" stroke-width="14.48" vector-effect="non-scaling-stroke">I</text><text y="2210.78" fill="#000" stroke="#000" stroke-width="7.28" vector-effect="non-scaling-stroke">I</text><text y="2212.42" fill="#000" stroke="#000" stroke-width="7.28" vector-effect="non-scaling-stroke">I</text><text y="2214.06" fill="#000" stroke="#000" stroke-width="7.28" vector-effect="non-scaling-stroke">I</text></g>
<g transform="translate(2628.15 0) scale(1.3821 1)" font-size="142.80"><text y="2210.78" fill="#1fe0ea" stroke="#1fe0ea" stroke-width="14.48" vector-effect="non-scaling-stroke">O</text><text y="2212.42" fill="#1fe0ea" stroke="#1fe0ea" stroke-width="14.48" vector-effect="non-scaling-stroke">O</text><text y="2214.06" fill="#1fe0ea" stroke="#1fe0ea" stroke-width="14.48" vector-effect="non-scaling-stroke">O</text><text y="2210.78" fill="#000" stroke="#000" stroke-width="7.28" vector-effect="non-scaling-stroke">O</text><text y="2212.42" fill="#000" stroke="#000" stroke-width="7.28" vector-effect="non-scaling-stroke">O</text><text y="2214.06" fill="#000" stroke="#000" stroke-width="7.28" vector-effect="non-scaling-stroke">O</text></g>
<g transform="translate(2776.82 0) scale(1.7240 1)" font-size="142.80"><text y="2210.78" fill="#1fe0ea" stroke="#1fe0ea" stroke-width="14.48" vector-effect="non-scaling-stroke">N</text><text y="2212.42" fill="#1fe0ea" stroke="#1fe0ea" stroke-width="14.48" vector-effect="non-scaling-stroke">N</text><text y="2214.06" fill="#1fe0ea" stroke="#1fe0ea" stroke-width="14.48" vector-effect="non-scaling-stroke">N</text><text y="2210.78" fill="#000" stroke="#000" stroke-width="7.28" vector-effect="non-scaling-stroke">N</text><text y="2212.42" fill="#000" stroke="#000" stroke-width="7.28" vector-effect="non-scaling-stroke">N</text><text y="2214.06" fill="#000" stroke="#000" stroke-width="7.28" vector-effect="non-scaling-stroke">N</text></g>
<g transform="translate(237.25 0) scale(1.5950 1)" font-size="142.80"><text y="2223.48" fill="#17cbd6" stroke="#17cbd6" stroke-width="14.48" vector-effect="non-scaling-stroke">S</text><text y="2225.12" fill="#17cbd6" stroke="#17cbd6" stroke-width="14.48" vector-effect="non-scaling-stroke">S</text><text y="2226.76" fill="#17cbd6" stroke="#17cbd6" stroke-width="14.48" vector-effect="non-scaling-stroke">S</text><text y="2223.48" fill="#000" stroke="#000" stroke-width="7.28" vector-effect="non-scaling-stroke">S</text><text y="2225.12" fill="#000" stroke="#000" stroke-width="7.28" vector-effect="non-scaling-stroke">S</text><text y="2226.76" fill="#000" stroke="#000" stroke-width="7.28" vector-effect="non-scaling-stroke">S</text></g>
<g transform="translate(383.13 0) scale(1.6551 1)" font-size="142.80"><text y="2223.48" fill="#17cbd6" stroke="#17cbd6" stroke-width="14.48" vector-effect="non-scaling-stroke">H</text><text y="2225.12" fill="#17cbd6" stroke="#17cbd6" stroke-width="14.48" vector-effect="non-scaling-stroke">H</text><text y="2226.76" fill="#17cbd6" stroke="#17cbd6" stroke-width="14.48" vector-effect="non-scaling-stroke">H</text><text y="2223.48" fill="#000" stroke="#000" stroke-width="7.28" vector-effect="non-scaling-stroke">H</text><text y="2225.12" fill="#000" stroke="#000" stroke-width="7.28" vector-effect="non-scaling-stroke">H</text><text y="2226.76" fill="#000" stroke="#000" stroke-width="7.28" vector-effect="non-scaling-stroke">H</text></g>
<g transform="translate(555.05 0) scale(1.5780 1)" font-size="142.80"><text y="2223.48" fill="#17cbd6" stroke="#17cbd6" stroke-width="14.48" vector-effect="non-scaling-stroke">A</text><text y="2225.12" fill="#17cbd6" stroke="#17cbd6" stroke-width="14.48" vector-effect="non-scaling-stroke">A</text><text y="2226.76" fill="#17cbd6" stroke="#17cbd6" stroke-width="14.48" vector-effect="non-scaling-stroke">A</text><text y="2223.48" fill="#000" stroke="#000" stroke-width="7.28" vector-effect="non-scaling-stroke">A</text><text y="2225.12" fill="#000" stroke="#000" stroke-width="7.28" vector-effect="non-scaling-stroke">A</text><text y="2226.76" fill="#000" stroke="#000" stroke-width="7.28" vector-effect="non-scaling-stroke">A</text></g>
<g transform="translate(710.04 0) scale(1.4391 1)" font-size="142.80"><text y="2223.48" fill="#17cbd6" stroke="#17cbd6" stroke-width="14.48" vector-effect="non-scaling-stroke">R</text><text y="2225.12" fill="#17cbd6" stroke="#17cbd6" stroke-width="14.48" vector-effect="non-scaling-stroke">R</text><text y="2226.76" fill="#17cbd6" stroke="#17cbd6" stroke-width="14.48" vector-effect="non-scaling-stroke">R</text><text y="2223.48" fill="#000" stroke="#000" stroke-width="7.28" vector-effect="non-scaling-stroke">R</text><text y="2225.12" fill="#000" stroke="#000" stroke-width="7.28" vector-effect="non-scaling-stroke">R</text><text y="2226.76" fill="#000" stroke="#000" stroke-width="7.28" vector-effect="non-scaling-stroke">R</text></g>
<g transform="translate(860.45 0) scale(1.3672 1)" font-size="142.80"><text y="2223.48" fill="#17cbd6" stroke="#17cbd6" stroke-width="14.48" vector-effect="non-scaling-stroke">E</text><text y="2225.12" fill="#17cbd6" stroke="#17cbd6" stroke-width="14.48" vector-effect="non-scaling-stroke">E</text><text y="2226.76" fill="#17cbd6" stroke="#17cbd6" stroke-width="14.48" vector-effect="non-scaling-stroke">E</text><text y="2223.48" fill="#000" stroke="#000" stroke-width="7.28" vector-effect="non-scaling-stroke">E</text><text y="2225.12" fill="#000" stroke="#000" stroke-width="7.28" vector-effect="non-scaling-stroke">E</text><text y="2226.76" fill="#000" stroke="#000" stroke-width="7.28" vector-effect="non-scaling-stroke">E</text></g>
<g transform="translate(1049.91 0) scale(1.7893 1)" font-size="142.80"><text y="2223.48" fill="#17cbd6" stroke="#17cbd6" stroke-width="14.48" vector-effect="non-scaling-stroke">M</text><text y="2225.12" fill="#17cbd6" stroke="#17cbd6" stroke-width="14.48" vector-effect="non-scaling-stroke">M</text><text y="2226.76" fill="#17cbd6" stroke="#17cbd6" stroke-width="14.48" vector-effect="non-scaling-stroke">M</text><text y="2223.48" fill="#000" stroke="#000" stroke-width="7.28" vector-effect="non-scaling-stroke">M</text><text y="2225.12" fill="#000" stroke="#000" stroke-width="7.28" vector-effect="non-scaling-stroke">M</text><text y="2226.76" fill="#000" stroke="#000" stroke-width="7.28" vector-effect="non-scaling-stroke">M</text></g>
<g transform="translate(1254.68 0) scale(1.4477 1)" font-size="142.80"><text y="2223.48" fill="#17cbd6" stroke="#17cbd6" stroke-width="14.48" vector-effect="non-scaling-stroke">O</text><text y="2225.12" fill="#17cbd6" stroke="#17cbd6" stroke-width="14.48" vector-effect="non-scaling-stroke">O</text><text y="2226.76" fill="#17cbd6" stroke="#17cbd6" stroke-width="14.48" vector-effect="non-scaling-stroke">O</text><text y="2223.48" fill="#000" stroke="#000" stroke-width="7.28" vector-effect="non-scaling-stroke">O</text><text y="2225.12" fill="#000" stroke="#000" stroke-width="7.28" vector-effect="non-scaling-stroke">O</text><text y="2226.76" fill="#000" stroke="#000" stroke-width="7.28" vector-effect="non-scaling-stroke">O</text></g>
<g transform="translate(1410.43 0) scale(1.4581 1)" font-size="142.80"><text y="2223.48" fill="#17cbd6" stroke="#17cbd6" stroke-width="14.48" vector-effect="non-scaling-stroke">D</text><text y="2225.12" fill="#17cbd6" stroke="#17cbd6" stroke-width="14.48" vector-effect="non-scaling-stroke">D</text><text y="2226.76" fill="#17cbd6" stroke="#17cbd6" stroke-width="14.48" vector-effect="non-scaling-stroke">D</text><text y="2223.48" fill="#000" stroke="#000" stroke-width="7.28" vector-effect="non-scaling-stroke">D</text><text y="2225.12" fill="#000" stroke="#000" stroke-width="7.28" vector-effect="non-scaling-stroke">D</text><text y="2226.76" fill="#000" stroke="#000" stroke-width="7.28" vector-effect="non-scaling-stroke">D</text></g>
<g transform="translate(1560.84 0) scale(1.3698 1)" font-size="142.80"><text y="2223.48" fill="#17cbd6" stroke="#17cbd6" stroke-width="14.48" vector-effect="non-scaling-stroke">E</text><text y="2225.12" fill="#17cbd6" stroke="#17cbd6" stroke-width="14.48" vector-effect="non-scaling-stroke">E</text><text y="2226.76" fill="#17cbd6" stroke="#17cbd6" stroke-width="14.48" vector-effect="non-scaling-stroke">E</text><text y="2223.48" fill="#000" stroke="#000" stroke-width="7.28" vector-effect="non-scaling-stroke">E</text><text y="2225.12" fill="#000" stroke="#000" stroke-width="7.28" vector-effect="non-scaling-stroke">E</text><text y="2226.76" fill="#000" stroke="#000" stroke-width="7.28" vector-effect="non-scaling-stroke">E</text></g>
<g transform="translate(1691.45 0) scale(1.5981 1)" font-size="142.80"><text y="2223.48" fill="#17cbd6" stroke="#17cbd6" stroke-width="14.48" vector-effect="non-scaling-stroke">L</text><text y="2225.12" fill="#17cbd6" stroke="#17cbd6" stroke-width="14.48" vector-effect="non-scaling-stroke">L</text><text y="2226.76" fill="#17cbd6" stroke="#17cbd6" stroke-width="14.48" vector-effect="non-scaling-stroke">L</text><text y="2223.48" fill="#000" stroke="#000" stroke-width="7.28" vector-effect="non-scaling-stroke">L</text><text y="2225.12" fill="#000" stroke="#000" stroke-width="7.28" vector-effect="non-scaling-stroke">L</text><text y="2226.76" fill="#000" stroke="#000" stroke-width="7.28" vector-effect="non-scaling-stroke">L</text></g>
<g transform="translate(1878.55 0) scale(1.4297 1)" font-size="142.80"><text y="2223.48" fill="#17cbd6" stroke="#17cbd6" stroke-width="14.48" vector-effect="non-scaling-stroke">R</text><text y="2225.12" fill="#17cbd6" stroke="#17cbd6" stroke-width="14.48" vector-effect="non-scaling-stroke">R</text><text y="2226.76" fill="#17cbd6" stroke="#17cbd6" stroke-width="14.48" vector-effect="non-scaling-stroke">R</text><text y="2223.48" fill="#000" stroke="#000" stroke-width="7.28" vector-effect="non-scaling-stroke">R</text><text y="2225.12" fill="#000" stroke="#000" stroke-width="7.28" vector-effect="non-scaling-stroke">R</text><text y="2226.76" fill="#000" stroke="#000" stroke-width="7.28" vector-effect="non-scaling-stroke">R</text></g>
<g transform="translate(2029.72 0) scale(1.4108 1)" font-size="142.80"><text y="2223.48" fill="#17cbd6" stroke="#17cbd6" stroke-width="14.48" vector-effect="non-scaling-stroke">O</text><text y="2225.12" fill="#17cbd6" stroke="#17cbd6" stroke-width="14.48" vector-effect="non-scaling-stroke">O</text><text y="2226.76" fill="#17cbd6" stroke="#17cbd6" stroke-width="14.48" vector-effect="non-scaling-stroke">O</text><text y="2223.48" fill="#000" stroke="#000" stroke-width="7.28" vector-effect="non-scaling-stroke">O</text><text y="2225.12" fill="#000" stroke="#000" stroke-width="7.28" vector-effect="non-scaling-stroke">O</text><text y="2226.76" fill="#000" stroke="#000" stroke-width="7.28" vector-effect="non-scaling-stroke">O</text></g>
<g transform="translate(2187.93 0) scale(1.5682 1)" font-size="142.80"><text y="2223.48" fill="#17cbd6" stroke="#17cbd6" stroke-width="14.48" vector-effect="non-scaling-stroke">T</text><text y="2225.12" fill="#17cbd6" stroke="#17cbd6" stroke-width="14.48" vector-effect="non-scaling-stroke">T</text><text y="2226.76" fill="#17cbd6" stroke="#17cbd6" stroke-width="14.48" vector-effect="non-scaling-stroke">T</text><text y="2223.48" fill="#000" stroke="#000" stroke-width="7.28" vector-effect="non-scaling-stroke">T</text><text y="2225.12" fill="#000" stroke="#000" stroke-width="7.28" vector-effect="non-scaling-stroke">T</text><text y="2226.76" fill="#000" stroke="#000" stroke-width="7.28" vector-effect="non-scaling-stroke">T</text></g>
<g transform="translate(2311.01 0) scale(1.5780 1)" font-size="142.80"><text y="2223.48" fill="#17cbd6" stroke="#17cbd6" stroke-width="14.48" vector-effect="non-scaling-stroke">A</text><text y="2225.12" fill="#17cbd6" stroke="#17cbd6" stroke-width="14.48" vector-effect="non-scaling-stroke">A</text><text y="2226.76" fill="#17cbd6" stroke="#17cbd6" stroke-width="14.48" vector-effect="non-scaling-stroke">A</text><text y="2223.48" fill="#000" stroke="#000" stroke-width="7.28" vector-effect="non-scaling-stroke">A</text><text y="2225.12" fill="#000" stroke="#000" stroke-width="7.28" vector-effect="non-scaling-stroke">A</text><text y="2226.76" fill="#000" stroke="#000" stroke-width="7.28" vector-effect="non-scaling-stroke">A</text></g>
<g transform="translate(2447.26 0) scale(1.5558 1)" font-size="142.80"><text y="2223.48" fill="#17cbd6" stroke="#17cbd6" stroke-width="14.48" vector-effect="non-scaling-stroke">T</text><text y="2225.12" fill="#17cbd6" stroke="#17cbd6" stroke-width="14.48" vector-effect="non-scaling-stroke">T</text><text y="2226.76" fill="#17cbd6" stroke="#17cbd6" stroke-width="14.48" vector-effect="non-scaling-stroke">T</text><text y="2223.48" fill="#000" stroke="#000" stroke-width="7.28" vector-effect="non-scaling-stroke">T</text><text y="2225.12" fill="#000" stroke="#000" stroke-width="7.28" vector-effect="non-scaling-stroke">T</text><text y="2226.76" fill="#000" stroke="#000" stroke-width="7.28" vector-effect="non-scaling-stroke">T</text></g>
<g transform="translate(2583.45 0) scale(1.5108 1)" font-size="142.80"><text y="2223.48" fill="#17cbd6" stroke="#17cbd6" stroke-width="14.48" vector-effect="non-scaling-stroke">I</text><text y="2225.12" fill="#17cbd6" stroke="#17cbd6" stroke-width="14.48" vector-effect="non-scaling-stroke">I</text><text y="2226.76" fill="#17cbd6" stroke="#17cbd6" stroke-width="14.48" vector-effect="non-scaling-stroke">I</text><text y="2223.48" fill="#000" stroke="#000" stroke-width="7.28" vector-effect="non-scaling-stroke">I</text><text y="2225.12" fill="#000" stroke="#000" stroke-width="7.28" vector-effect="non-scaling-stroke">I</text><text y="2226.76" fill="#000" stroke="#000" stroke-width="7.28" vector-effect="non-scaling-stroke">I</text></g>
<g transform="translate(2639.27 0) scale(1.3821 1)" font-size="142.80"><text y="2223.48" fill="#17cbd6" stroke="#17cbd6" stroke-width="14.48" vector-effect="non-scaling-stroke">O</text><text y="2225.12" fill="#17cbd6" stroke="#17cbd6" stroke-width="14.48" vector-effect="non-scaling-stroke">O</text><text y="2226.76" fill="#17cbd6" stroke="#17cbd6" stroke-width="14.48" vector-effect="non-scaling-stroke">O</text><text y="2223.48" fill="#000" stroke="#000" stroke-width="7.28" vector-effect="non-scaling-stroke">O</text><text y="2225.12" fill="#000" stroke="#000" stroke-width="7.28" vector-effect="non-scaling-stroke">O</text><text y="2226.76" fill="#000" stroke="#000" stroke-width="7.28" vector-effect="non-scaling-stroke">O</text></g>
<g transform="translate(2789.58 0) scale(1.7240 1)" font-size="142.80"><text y="2223.48" fill="#17cbd6" stroke="#17cbd6" stroke-width="14.48" vector-effect="non-scaling-stroke">N</text><text y="2225.12" fill="#17cbd6" stroke="#17cbd6" stroke-width="14.48" vector-effect="non-scaling-stroke">N</text><text y="2226.76" fill="#17cbd6" stroke="#17cbd6" stroke-width="14.48" vector-effect="non-scaling-stroke">N</text><text y="2223.48" fill="#000" stroke="#000" stroke-width="7.28" vector-effect="non-scaling-stroke">N</text><text y="2225.12" fill="#000" stroke="#000" stroke-width="7.28" vector-effect="non-scaling-stroke">N</text><text y="2226.76" fill="#000" stroke="#000" stroke-width="7.28" vector-effect="non-scaling-stroke">N</text></g>
<g transform="translate(224.10 0) scale(1.5950 1)" font-size="142.80"><text y="2236.18" fill="#0fb6c1" stroke="#0fb6c1" stroke-width="14.48" vector-effect="non-scaling-stroke">S</text><text y="2237.82" fill="#0fb6c1" stroke="#0fb6c1" stroke-width="14.48" vector-effect="non-scaling-stroke">S</text><text y="2239.46" fill="#0fb6c1" stroke="#0fb6c1" stroke-width="14.48" vector-effect="non-scaling-stroke">S</text><text y="2236.18" fill="#000" stroke="#000" stroke-width="7.28" vector-effect="non-scaling-stroke">S</text><text y="2237.82" fill="#000" stroke="#000" stroke-width="7.28" vector-effect="non-scaling-stroke">S</text><text y="2239.46" fill="#000" stroke="#000" stroke-width="7.28" vector-effect="non-scaling-stroke">S</text></g>
<g transform="translate(371.55 0) scale(1.6551 1)" font-size="142.80"><text y="2236.18" fill="#0fb6c1" stroke="#0fb6c1" stroke-width="14.48" vector-effect="non-scaling-stroke">H</text><text y="2237.82" fill="#0fb6c1" stroke="#0fb6c1" stroke-width="14.48" vector-effect="non-scaling-stroke">H</text><text y="2239.46" fill="#0fb6c1" stroke="#0fb6c1" stroke-width="14.48" vector-effect="non-scaling-stroke">H</text><text y="2236.18" fill="#000" stroke="#000" stroke-width="7.28" vector-effect="non-scaling-stroke">H</text><text y="2237.82" fill="#000" stroke="#000" stroke-width="7.28" vector-effect="non-scaling-stroke">H</text><text y="2239.46" fill="#000" stroke="#000" stroke-width="7.28" vector-effect="non-scaling-stroke">H</text></g>
<g transform="translate(545.10 0) scale(1.5780 1)" font-size="142.80"><text y="2236.18" fill="#0fb6c1" stroke="#0fb6c1" stroke-width="14.48" vector-effect="non-scaling-stroke">A</text><text y="2237.82" fill="#0fb6c1" stroke="#0fb6c1" stroke-width="14.48" vector-effect="non-scaling-stroke">A</text><text y="2239.46" fill="#0fb6c1" stroke="#0fb6c1" stroke-width="14.48" vector-effect="non-scaling-stroke">A</text><text y="2236.18" fill="#000" stroke="#000" stroke-width="7.28" vector-effect="non-scaling-stroke">A</text><text y="2237.82" fill="#000" stroke="#000" stroke-width="7.28" vector-effect="non-scaling-stroke">A</text><text y="2239.46" fill="#000" stroke="#000" stroke-width="7.28" vector-effect="non-scaling-stroke">A</text></g>
<g transform="translate(701.68 0) scale(1.4391 1)" font-size="142.80"><text y="2236.18" fill="#0fb6c1" stroke="#0fb6c1" stroke-width="14.48" vector-effect="non-scaling-stroke">R</text><text y="2237.82" fill="#0fb6c1" stroke="#0fb6c1" stroke-width="14.48" vector-effect="non-scaling-stroke">R</text><text y="2239.46" fill="#0fb6c1" stroke="#0fb6c1" stroke-width="14.48" vector-effect="non-scaling-stroke">R</text><text y="2236.18" fill="#000" stroke="#000" stroke-width="7.28" vector-effect="non-scaling-stroke">R</text><text y="2237.82" fill="#000" stroke="#000" stroke-width="7.28" vector-effect="non-scaling-stroke">R</text><text y="2239.46" fill="#000" stroke="#000" stroke-width="7.28" vector-effect="non-scaling-stroke">R</text></g>
<g transform="translate(853.52 0) scale(1.3672 1)" font-size="142.80"><text y="2236.18" fill="#0fb6c1" stroke="#0fb6c1" stroke-width="14.48" vector-effect="non-scaling-stroke">E</text><text y="2237.82" fill="#0fb6c1" stroke="#0fb6c1" stroke-width="14.48" vector-effect="non-scaling-stroke">E</text><text y="2239.46" fill="#0fb6c1" stroke="#0fb6c1" stroke-width="14.48" vector-effect="non-scaling-stroke">E</text><text y="2236.18" fill="#000" stroke="#000" stroke-width="7.28" vector-effect="non-scaling-stroke">E</text><text y="2237.82" fill="#000" stroke="#000" stroke-width="7.28" vector-effect="non-scaling-stroke">E</text><text y="2239.46" fill="#000" stroke="#000" stroke-width="7.28" vector-effect="non-scaling-stroke">E</text></g>
<g transform="translate(1045.28 0) scale(1.7893 1)" font-size="142.80"><text y="2236.18" fill="#0fb6c1" stroke="#0fb6c1" stroke-width="14.48" vector-effect="non-scaling-stroke">M</text><text y="2237.82" fill="#0fb6c1" stroke="#0fb6c1" stroke-width="14.48" vector-effect="non-scaling-stroke">M</text><text y="2239.46" fill="#0fb6c1" stroke="#0fb6c1" stroke-width="14.48" vector-effect="non-scaling-stroke">M</text><text y="2236.18" fill="#000" stroke="#000" stroke-width="7.28" vector-effect="non-scaling-stroke">M</text><text y="2237.82" fill="#000" stroke="#000" stroke-width="7.28" vector-effect="non-scaling-stroke">M</text><text y="2239.46" fill="#000" stroke="#000" stroke-width="7.28" vector-effect="non-scaling-stroke">M</text></g>
<g transform="translate(1251.85 0) scale(1.4477 1)" font-size="142.80"><text y="2236.18" fill="#0fb6c1" stroke="#0fb6c1" stroke-width="14.48" vector-effect="non-scaling-stroke">O</text><text y="2237.82" fill="#0fb6c1" stroke="#0fb6c1" stroke-width="14.48" vector-effect="non-scaling-stroke">O</text><text y="2239.46" fill="#0fb6c1" stroke="#0fb6c1" stroke-width="14.48" vector-effect="non-scaling-stroke">O</text><text y="2236.18" fill="#000" stroke="#000" stroke-width="7.28" vector-effect="non-scaling-stroke">O</text><text y="2237.82" fill="#000" stroke="#000" stroke-width="7.28" vector-effect="non-scaling-stroke">O</text><text y="2239.46" fill="#000" stroke="#000" stroke-width="7.28" vector-effect="non-scaling-stroke">O</text></g>
<g transform="translate(1409.16 0) scale(1.4581 1)" font-size="142.80"><text y="2236.18" fill="#0fb6c1" stroke="#0fb6c1" stroke-width="14.48" vector-effect="non-scaling-stroke">D</text><text y="2237.82" fill="#0fb6c1" stroke="#0fb6c1" stroke-width="14.48" vector-effect="non-scaling-stroke">D</text><text y="2239.46" fill="#0fb6c1" stroke="#0fb6c1" stroke-width="14.48" vector-effect="non-scaling-stroke">D</text><text y="2236.18" fill="#000" stroke="#000" stroke-width="7.28" vector-effect="non-scaling-stroke">D</text><text y="2237.82" fill="#000" stroke="#000" stroke-width="7.28" vector-effect="non-scaling-stroke">D</text><text y="2239.46" fill="#000" stroke="#000" stroke-width="7.28" vector-effect="non-scaling-stroke">D</text></g>
<g transform="translate(1560.99 0) scale(1.3698 1)" font-size="142.80"><text y="2236.18" fill="#0fb6c1" stroke="#0fb6c1" stroke-width="14.48" vector-effect="non-scaling-stroke">E</text><text y="2237.82" fill="#0fb6c1" stroke="#0fb6c1" stroke-width="14.48" vector-effect="non-scaling-stroke">E</text><text y="2239.46" fill="#0fb6c1" stroke="#0fb6c1" stroke-width="14.48" vector-effect="non-scaling-stroke">E</text><text y="2236.18" fill="#000" stroke="#000" stroke-width="7.28" vector-effect="non-scaling-stroke">E</text><text y="2237.82" fill="#000" stroke="#000" stroke-width="7.28" vector-effect="non-scaling-stroke">E</text><text y="2239.46" fill="#000" stroke="#000" stroke-width="7.28" vector-effect="non-scaling-stroke">E</text></g>
<g transform="translate(1692.92 0) scale(1.5981 1)" font-size="142.80"><text y="2236.18" fill="#0fb6c1" stroke="#0fb6c1" stroke-width="14.48" vector-effect="non-scaling-stroke">L</text><text y="2237.82" fill="#0fb6c1" stroke="#0fb6c1" stroke-width="14.48" vector-effect="non-scaling-stroke">L</text><text y="2239.46" fill="#0fb6c1" stroke="#0fb6c1" stroke-width="14.48" vector-effect="non-scaling-stroke">L</text><text y="2236.18" fill="#000" stroke="#000" stroke-width="7.28" vector-effect="non-scaling-stroke">L</text><text y="2237.82" fill="#000" stroke="#000" stroke-width="7.28" vector-effect="non-scaling-stroke">L</text><text y="2239.46" fill="#000" stroke="#000" stroke-width="7.28" vector-effect="non-scaling-stroke">L</text></g>
<g transform="translate(1881.99 0) scale(1.4297 1)" font-size="142.80"><text y="2236.18" fill="#0fb6c1" stroke="#0fb6c1" stroke-width="14.48" vector-effect="non-scaling-stroke">R</text><text y="2237.82" fill="#0fb6c1" stroke="#0fb6c1" stroke-width="14.48" vector-effect="non-scaling-stroke">R</text><text y="2239.46" fill="#0fb6c1" stroke="#0fb6c1" stroke-width="14.48" vector-effect="non-scaling-stroke">R</text><text y="2236.18" fill="#000" stroke="#000" stroke-width="7.28" vector-effect="non-scaling-stroke">R</text><text y="2237.82" fill="#000" stroke="#000" stroke-width="7.28" vector-effect="non-scaling-stroke">R</text><text y="2239.46" fill="#000" stroke="#000" stroke-width="7.28" vector-effect="non-scaling-stroke">R</text></g>
<g transform="translate(2034.70 0) scale(1.4108 1)" font-size="142.80"><text y="2236.18" fill="#0fb6c1" stroke="#0fb6c1" stroke-width="14.48" vector-effect="non-scaling-stroke">O</text><text y="2237.82" fill="#0fb6c1" stroke="#0fb6c1" stroke-width="14.48" vector-effect="non-scaling-stroke">O</text><text y="2239.46" fill="#0fb6c1" stroke="#0fb6c1" stroke-width="14.48" vector-effect="non-scaling-stroke">O</text><text y="2236.18" fill="#000" stroke="#000" stroke-width="7.28" vector-effect="non-scaling-stroke">O</text><text y="2237.82" fill="#000" stroke="#000" stroke-width="7.28" vector-effect="non-scaling-stroke">O</text><text y="2239.46" fill="#000" stroke="#000" stroke-width="7.28" vector-effect="non-scaling-stroke">O</text></g>
<g transform="translate(2194.41 0) scale(1.5682 1)" font-size="142.80"><text y="2236.18" fill="#0fb6c1" stroke="#0fb6c1" stroke-width="14.48" vector-effect="non-scaling-stroke">T</text><text y="2237.82" fill="#0fb6c1" stroke="#0fb6c1" stroke-width="14.48" vector-effect="non-scaling-stroke">T</text><text y="2239.46" fill="#0fb6c1" stroke="#0fb6c1" stroke-width="14.48" vector-effect="non-scaling-stroke">T</text><text y="2236.18" fill="#000" stroke="#000" stroke-width="7.28" vector-effect="non-scaling-stroke">T</text><text y="2237.82" fill="#000" stroke="#000" stroke-width="7.28" vector-effect="non-scaling-stroke">T</text><text y="2239.46" fill="#000" stroke="#000" stroke-width="7.28" vector-effect="non-scaling-stroke">T</text></g>
<g transform="translate(2318.80 0) scale(1.5780 1)" font-size="142.80"><text y="2236.18" fill="#0fb6c1" stroke="#0fb6c1" stroke-width="14.48" vector-effect="non-scaling-stroke">A</text><text y="2237.82" fill="#0fb6c1" stroke="#0fb6c1" stroke-width="14.48" vector-effect="non-scaling-stroke">A</text><text y="2239.46" fill="#0fb6c1" stroke="#0fb6c1" stroke-width="14.48" vector-effect="non-scaling-stroke">A</text><text y="2236.18" fill="#000" stroke="#000" stroke-width="7.28" vector-effect="non-scaling-stroke">A</text><text y="2237.82" fill="#000" stroke="#000" stroke-width="7.28" vector-effect="non-scaling-stroke">A</text><text y="2239.46" fill="#000" stroke="#000" stroke-width="7.28" vector-effect="non-scaling-stroke">A</text></g>
<g transform="translate(2456.35 0) scale(1.5558 1)" font-size="142.80"><text y="2236.18" fill="#0fb6c1" stroke="#0fb6c1" stroke-width="14.48" vector-effect="non-scaling-stroke">T</text><text y="2237.82" fill="#0fb6c1" stroke="#0fb6c1" stroke-width="14.48" vector-effect="non-scaling-stroke">T</text><text y="2239.46" fill="#0fb6c1" stroke="#0fb6c1" stroke-width="14.48" vector-effect="non-scaling-stroke">T</text><text y="2236.18" fill="#000" stroke="#000" stroke-width="7.28" vector-effect="non-scaling-stroke">T</text><text y="2237.82" fill="#000" stroke="#000" stroke-width="7.28" vector-effect="non-scaling-stroke">T</text><text y="2239.46" fill="#000" stroke="#000" stroke-width="7.28" vector-effect="non-scaling-stroke">T</text></g>
<g transform="translate(2593.53 0) scale(1.5108 1)" font-size="142.80"><text y="2236.18" fill="#0fb6c1" stroke="#0fb6c1" stroke-width="14.48" vector-effect="non-scaling-stroke">I</text><text y="2237.82" fill="#0fb6c1" stroke="#0fb6c1" stroke-width="14.48" vector-effect="non-scaling-stroke">I</text><text y="2239.46" fill="#0fb6c1" stroke="#0fb6c1" stroke-width="14.48" vector-effect="non-scaling-stroke">I</text><text y="2236.18" fill="#000" stroke="#000" stroke-width="7.28" vector-effect="non-scaling-stroke">I</text><text y="2237.82" fill="#000" stroke="#000" stroke-width="7.28" vector-effect="non-scaling-stroke">I</text><text y="2239.46" fill="#000" stroke="#000" stroke-width="7.28" vector-effect="non-scaling-stroke">I</text></g>
<g transform="translate(2650.39 0) scale(1.3821 1)" font-size="142.80"><text y="2236.18" fill="#0fb6c1" stroke="#0fb6c1" stroke-width="14.48" vector-effect="non-scaling-stroke">O</text><text y="2237.82" fill="#0fb6c1" stroke="#0fb6c1" stroke-width="14.48" vector-effect="non-scaling-stroke">O</text><text y="2239.46" fill="#0fb6c1" stroke="#0fb6c1" stroke-width="14.48" vector-effect="non-scaling-stroke">O</text><text y="2236.18" fill="#000" stroke="#000" stroke-width="7.28" vector-effect="non-scaling-stroke">O</text><text y="2237.82" fill="#000" stroke="#000" stroke-width="7.28" vector-effect="non-scaling-stroke">O</text><text y="2239.46" fill="#000" stroke="#000" stroke-width="7.28" vector-effect="non-scaling-stroke">O</text></g>
<g transform="translate(2802.34 0) scale(1.7240 1)" font-size="142.80"><text y="2236.18" fill="#0fb6c1" stroke="#0fb6c1" stroke-width="14.48" vector-effect="non-scaling-stroke">N</text><text y="2237.82" fill="#0fb6c1" stroke="#0fb6c1" stroke-width="14.48" vector-effect="non-scaling-stroke">N</text><text y="2239.46" fill="#0fb6c1" stroke="#0fb6c1" stroke-width="14.48" vector-effect="non-scaling-stroke">N</text><text y="2236.18" fill="#000" stroke="#000" stroke-width="7.28" vector-effect="non-scaling-stroke">N</text><text y="2237.82" fill="#000" stroke="#000" stroke-width="7.28" vector-effect="non-scaling-stroke">N</text><text y="2239.46" fill="#000" stroke="#000" stroke-width="7.28" vector-effect="non-scaling-stroke">N</text></g>
</g>
</svg></body></html>
